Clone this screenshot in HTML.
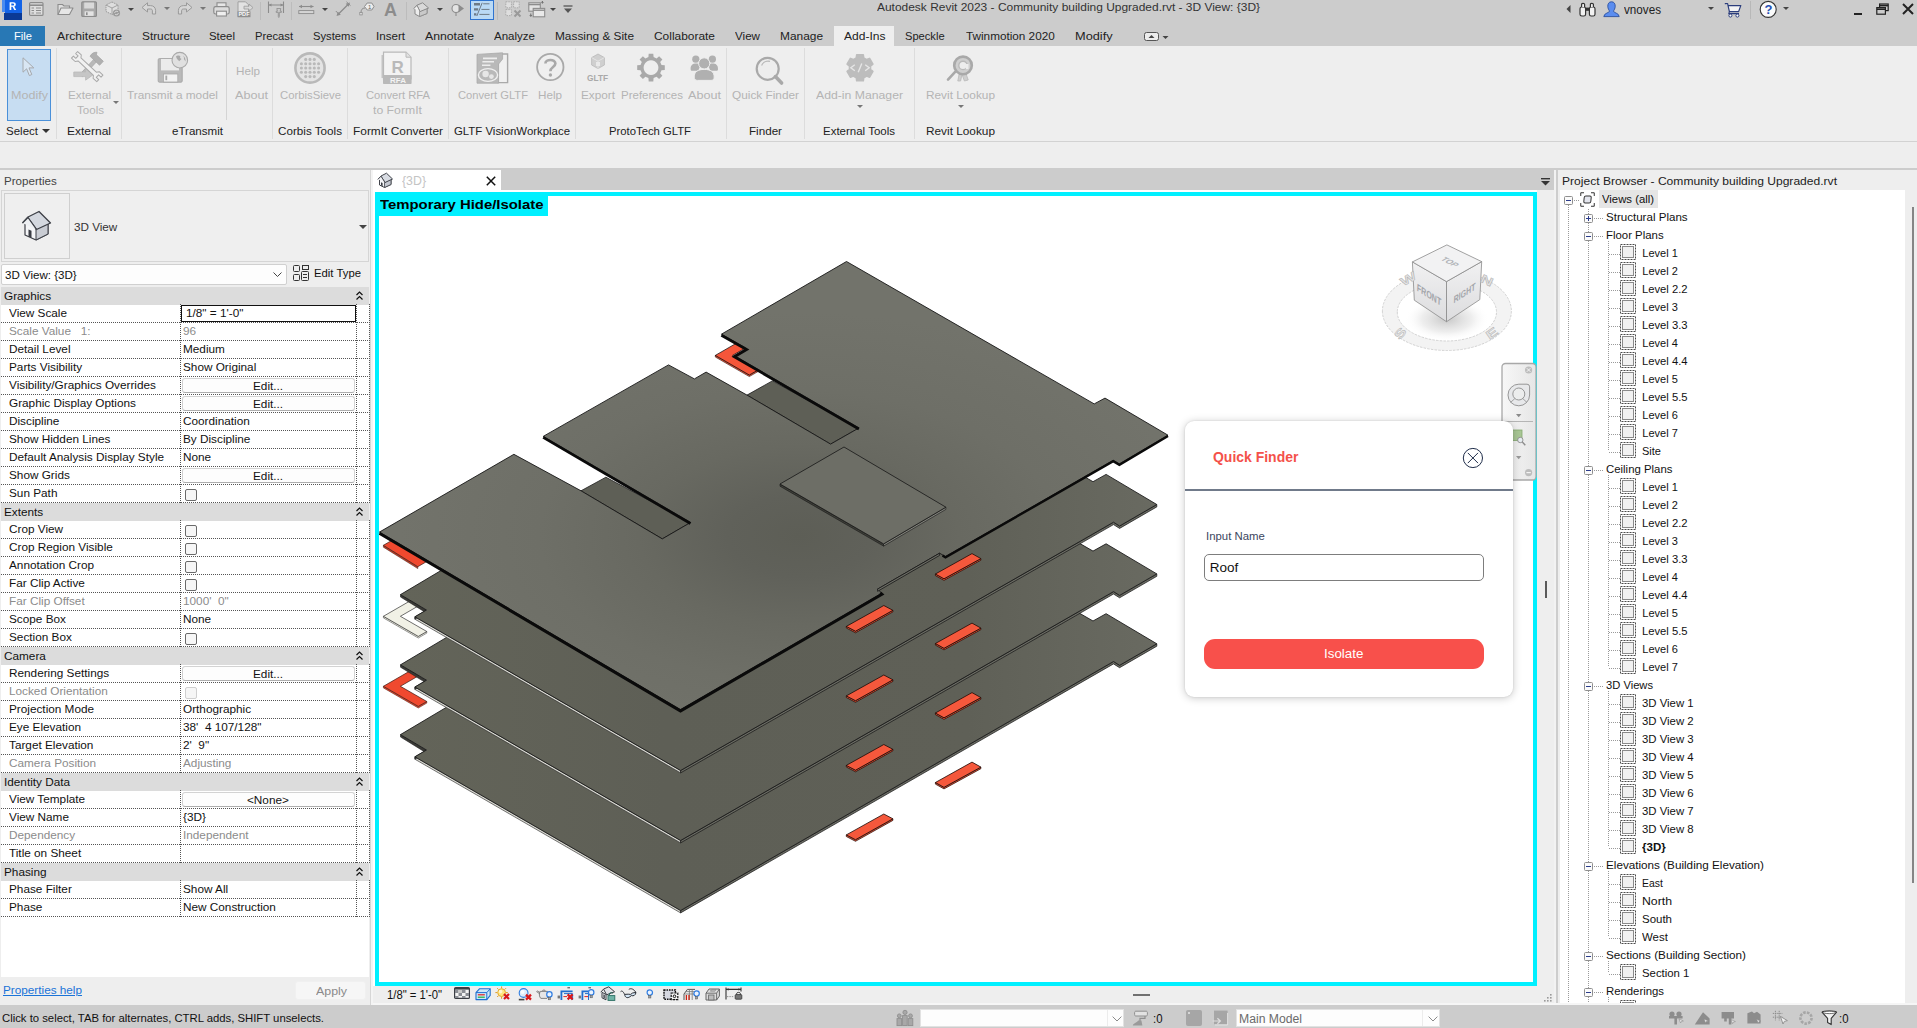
<!DOCTYPE html>
<html><head><meta charset="utf-8"><title>Revit</title>
<style>
*{box-sizing:border-box;margin:0;padding:0}
html,body{width:1917px;height:1028px;overflow:hidden;background:#eeeeee}
body{font-family:"Liberation Sans",sans-serif;font-size:11.5px;color:#1a1a1a;position:relative}
.a{position:absolute}
.t{position:absolute;white-space:pre}
.c{text-align:center}
.dis{color:#b9b9b9}
svg{position:absolute;overflow:visible}
</style></head><body>
<!-- title bar + tab row -->
<div class="a" style="left:0;top:0;width:1917px;height:46px;background:#cccccc"></div>
<div class="a" style="left:0;top:26px;width:45px;height:20px;background:#2878b5"></div>
<div class="a" style="left:834px;top:26px;width:60px;height:20px;background:#eeeeee"></div>
<!-- ribbon -->
<div class="a" style="left:0;top:46px;width:1917px;height:95px;background:#eeeeee"></div>
<div class="a" style="left:0;top:141px;width:1917px;height:1px;background:#d2d2d2"></div>
<div class="a" style="left:0;top:142px;width:1917px;height:26px;background:#eeeeee"></div>
<div class="a" style="left:0;top:168px;width:1917px;height:2px;background:#cccccc"></div>
<!-- status bar -->
<div class="a" style="left:0;top:1006px;width:1917px;height:22px;background:#cccccc"></div>
<div class="t" style="left:877.00px;top:1px;font-size:11px;line-height:12px;height:12px;transform:scaleX(1.0863);transform-origin:0 0;color:#333;">Autodesk Revit 2023 - Community building Upgraded.rvt - 3D View: {3D}</div>
<div class="t" style="left:13.50px;top:30px;font-size:11px;line-height:12px;height:12px;transform:scaleX(1.0156);transform-origin:0 0;color:#fff;">File</div>
<div class="t" style="left:57.00px;top:30px;font-size:11px;line-height:12px;height:12px;transform:scaleX(1.1075);transform-origin:0 0;color:#222;">Architecture</div>
<div class="t" style="left:142.00px;top:30px;font-size:11px;line-height:12px;height:12px;transform:scaleX(1.0755);transform-origin:0 0;color:#222;">Structure</div>
<div class="t" style="left:209.00px;top:30px;font-size:11px;line-height:12px;height:12px;transform:scaleX(1.0370);transform-origin:0 0;color:#222;">Steel</div>
<div class="t" style="left:255.00px;top:30px;font-size:11px;line-height:12px;height:12px;transform:scaleX(1.0190);transform-origin:0 0;color:#222;">Precast</div>
<div class="t" style="left:313.00px;top:30px;font-size:11px;line-height:12px;height:12px;transform:scaleX(1.0195);transform-origin:0 0;color:#222;">Systems</div>
<div class="t" style="left:376.00px;top:30px;font-size:11px;line-height:12px;height:12px;transform:scaleX(1.0541);transform-origin:0 0;color:#222;">Insert</div>
<div class="t" style="left:425.00px;top:30px;font-size:11px;line-height:12px;height:12px;transform:scaleX(1.1127);transform-origin:0 0;color:#222;">Annotate</div>
<div class="t" style="left:494.00px;top:30px;font-size:11px;line-height:12px;height:12px;transform:scaleX(1.0477);transform-origin:0 0;color:#222;">Analyze</div>
<div class="t" style="left:555.00px;top:30px;font-size:11px;line-height:12px;height:12px;transform:scaleX(1.0768);transform-origin:0 0;color:#222;">Massing &amp; Site</div>
<div class="t" style="left:654.00px;top:30px;font-size:11px;line-height:12px;height:12px;transform:scaleX(1.0844);transform-origin:0 0;color:#222;">Collaborate</div>
<div class="t" style="left:735.00px;top:30px;font-size:11px;line-height:12px;height:12px;transform:scaleX(1.0574);transform-origin:0 0;color:#222;">View</div>
<div class="t" style="left:780.00px;top:30px;font-size:11px;line-height:12px;height:12px;transform:scaleX(1.0818);transform-origin:0 0;color:#222;">Manage</div>
<div class="t" style="left:843.50px;top:30px;font-size:11px;line-height:12px;height:12px;transform:scaleX(1.0947);transform-origin:0 0;color:#222;">Add-Ins</div>
<div class="t" style="left:905.40px;top:30px;font-size:11px;line-height:12px;height:12px;transform:scaleX(1.0119);transform-origin:0 0;color:#222;">Speckle</div>
<div class="t" style="left:966.00px;top:30px;font-size:11px;line-height:12px;height:12px;transform:scaleX(1.0667);transform-origin:0 0;color:#222;">Twinmotion 2020</div>
<div class="t" style="left:1075.40px;top:30px;font-size:11px;line-height:12px;height:12px;transform:scaleX(1.1605);transform-origin:0 0;color:#222;">Modify</div>
<svg style="left:1144px;top:32px" width="30" height="10"><rect x="0.5" y="0.5" width="14" height="8" rx="2" fill="#ececec" stroke="#555" stroke-width="1"/><path d="M4.5 6 L7.5 3 L10.5 6Z" fill="#444"/><path d="M18.5 4 L24.5 4 L21.5 7Z" fill="#444"/></svg>
<div class="a" style="left:56px;top:48px;width:1px;height:91px;background:#dcdcdc;"></div>
<div class="a" style="left:121px;top:48px;width:1px;height:91px;background:#dcdcdc;"></div>
<div class="a" style="left:272px;top:48px;width:1px;height:91px;background:#dcdcdc;"></div>
<div class="a" style="left:347px;top:48px;width:1px;height:91px;background:#dcdcdc;"></div>
<div class="a" style="left:448px;top:48px;width:1px;height:91px;background:#dcdcdc;"></div>
<div class="a" style="left:575px;top:48px;width:1px;height:91px;background:#dcdcdc;"></div>
<div class="a" style="left:726px;top:48px;width:1px;height:91px;background:#dcdcdc;"></div>
<div class="a" style="left:804px;top:48px;width:1px;height:91px;background:#dcdcdc;"></div>
<div class="a" style="left:914px;top:48px;width:1px;height:91px;background:#dcdcdc;"></div>
<div class="a" style="left:226px;top:50px;width:1px;height:70px;background:#d4d4d4;"></div>
<div class="a" style="left:7px;top:49px;width:44px;height:72px;background:#c7ddf2;border:1px solid #4a90d9;"></div>
<div class="t" style="left:10.50px;top:89px;font-size:11px;line-height:12px;height:12px;transform:scaleX(1.1420);transform-origin:0 0;color:#b4b4b4;">Modify</div>
<div class="t" style="left:67.50px;top:89px;font-size:11px;line-height:12px;height:12px;transform:scaleX(1.0656);transform-origin:0 0;color:#b4b4b4;">External</div>
<div class="t" style="left:76.50px;top:104px;font-size:11px;line-height:12px;height:12px;transform:scaleX(1.0515);transform-origin:0 0;color:#b4b4b4;">Tools</div>
<div class="t" style="left:127.00px;top:89px;font-size:11px;line-height:12px;height:12px;transform:scaleX(1.0761);transform-origin:0 0;color:#b4b4b4;">Transmit a model</div>
<div class="t" style="left:235.50px;top:65px;font-size:11px;line-height:12px;height:12px;transform:scaleX(1.0610);transform-origin:0 0;color:#b4b4b4;">Help</div>
<div class="t" style="left:235.00px;top:89px;font-size:11px;line-height:12px;height:12px;transform:scaleX(1.1480);transform-origin:0 0;color:#b4b4b4;">About</div>
<div class="t" style="left:280.00px;top:89px;font-size:11px;line-height:12px;height:12px;transform:scaleX(1.0287);transform-origin:0 0;color:#b4b4b4;">CorbisSieve</div>
<div class="t" style="left:365.50px;top:89px;font-size:11px;line-height:12px;height:12px;transform:scaleX(1.0164);transform-origin:0 0;color:#b4b4b4;">Convert RFA</div>
<div class="t" style="left:373.00px;top:104px;font-size:11px;line-height:12px;height:12px;transform:scaleX(1.1134);transform-origin:0 0;color:#b4b4b4;">to FormIt</div>
<div class="t" style="left:457.50px;top:89px;font-size:11px;line-height:12px;height:12px;transform:scaleX(1.0164);transform-origin:0 0;color:#b4b4b4;">Convert GLTF</div>
<div class="t" style="left:538.00px;top:89px;font-size:11px;line-height:12px;height:12px;transform:scaleX(1.0610);transform-origin:0 0;color:#b4b4b4;">Help</div>
<div class="t" style="left:580.50px;top:89px;font-size:11px;line-height:12px;height:12px;transform:scaleX(1.0694);transform-origin:0 0;color:#b4b4b4;">Export</div>
<div class="t" style="left:620.50px;top:89px;font-size:11px;line-height:12px;height:12px;transform:scaleX(1.0454);transform-origin:0 0;color:#b4b4b4;">Preferences</div>
<div class="t" style="left:687.50px;top:89px;font-size:11px;line-height:12px;height:12px;transform:scaleX(1.1480);transform-origin:0 0;color:#b4b4b4;">About</div>
<div class="t" style="left:732.00px;top:89px;font-size:11px;line-height:12px;height:12px;transform:scaleX(1.0746);transform-origin:0 0;color:#b4b4b4;">Quick Finder</div>
<div class="t" style="left:816.00px;top:89px;font-size:11px;line-height:12px;height:12px;transform:scaleX(1.1116);transform-origin:0 0;color:#b4b4b4;">Add-in Manager</div>
<div class="t" style="left:926.00px;top:89px;font-size:11px;line-height:12px;height:12px;transform:scaleX(1.0747);transform-origin:0 0;color:#b4b4b4;">Revit Lookup</div>
<svg style="left:112.5px;top:101px" width="6" height="3"><path d="M0 0 L6 0 L3 3Z" fill="#777"/></svg>
<svg style="left:856.5px;top:105px" width="6" height="3"><path d="M0 0 L6 0 L3 3Z" fill="#777"/></svg>
<svg style="left:957.5px;top:105px" width="6" height="3"><path d="M0 0 L6 0 L3 3Z" fill="#777"/></svg>
<div class="t" style="left:66.50px;top:125px;font-size:11px;line-height:12px;height:12px;transform:scaleX(1.0904);transform-origin:0 0;color:#222;">External</div>
<div class="t" style="left:171.50px;top:125px;font-size:11px;line-height:12px;height:12px;transform:scaleX(1.0518);transform-origin:0 0;color:#222;">eTransmit</div>
<div class="t" style="left:278.00px;top:125px;font-size:11px;line-height:12px;height:12px;transform:scaleX(1.0610);transform-origin:0 0;color:#222;">Corbis Tools</div>
<div class="t" style="left:353.00px;top:125px;font-size:11px;line-height:12px;height:12px;transform:scaleX(1.0826);transform-origin:0 0;color:#222;">FormIt Converter</div>
<div class="t" style="left:454.00px;top:125px;font-size:11px;line-height:12px;height:12px;transform:scaleX(1.0369);transform-origin:0 0;color:#222;">GLTF VisionWorkplace</div>
<div class="t" style="left:609.00px;top:125px;font-size:11px;line-height:12px;height:12px;transform:scaleX(1.0266);transform-origin:0 0;color:#222;">ProtoTech GLTF</div>
<div class="t" style="left:749.00px;top:125px;font-size:11px;line-height:12px;height:12px;transform:scaleX(1.0584);transform-origin:0 0;color:#222;">Finder</div>
<div class="t" style="left:823.00px;top:125px;font-size:11px;line-height:12px;height:12px;transform:scaleX(1.0452);transform-origin:0 0;color:#222;">External Tools</div>
<div class="t" style="left:926.00px;top:125px;font-size:11px;line-height:12px;height:12px;transform:scaleX(1.0747);transform-origin:0 0;color:#222;">Revit Lookup</div>
<div class="t" style="left:6.00px;top:125px;font-size:11px;line-height:12px;height:12px;transform:scaleX(1.0467);transform-origin:0 0;color:#222;">Select</div>
<svg style="left:42px;top:129px" width="8" height="4"><path d="M0 0 L8 0 L4 4Z" fill="#333"/></svg>
<svg style="left:22px;top:57px" width="14" height="21" viewBox="0 0 14 21"><path d="M1 0.8V15.2L4.6 11.8L7.4 18.6L9.8 17.5L7 10.9H11.8Z" fill="#d9e6f3" stroke="#a6a9ad" stroke-width="1" stroke-linejoin="round"/></svg>
<svg style="left:73px;top:53px" width="32" height="29" viewBox="0 0 32 29"><g stroke-linejoin="round">
<g transform="translate(18.5 11.5) rotate(-47)"><path d="M-15 -1.8H6V1.8H-15Z" fill="#b9b9b9" stroke="#a9a9a9" stroke-width="0.8"/><path d="M5 -6.6C8 -7.6 11 -6.6 12.6 -4.4L10.4 -3V6.4H5Z" fill="#b0b0b0" stroke="#a9a9a9" stroke-width="0.8"/></g>
<path d="M0.8 19H12.6V15.6L20.6 21.4L12.6 27.2V23.6H0.8Z" fill="#c6c6c6" stroke="#b9b9b9" stroke-width="0.8"/>
<g transform="translate(14.2 13.6) rotate(43)"><path d="M-10.5 -2.1L-12.3 -4.5H-17.3V-1.7H-14V1.7H-17.3V4.5H-12.3L-10.5 2.1H10.5L12.3 4.5H17.3V1.7H14V-1.7H17.3V-4.5H12.3L10.5 -2.1Z" fill="#f1f1f1" stroke="#a9a9a9" stroke-width="1"/></g></g></svg>
<svg style="left:157px;top:52px" width="32" height="31" viewBox="0 0 32 31"><rect x="1.2" y="6.6" width="24" height="23.6" rx="1.2" fill="#b9b9b9" stroke="#a9a9a9" stroke-width="1"/>
<rect x="4" y="7" width="18" height="11.4" fill="#ebebeb"/><rect x="6.4" y="22" width="14.4" height="8" fill="#f2f2f2" stroke="#a9a9a9" stroke-width="0.8"/><rect x="8.4" y="23.6" width="1.8" height="4.6" fill="#a9a9a9"/>
<circle cx="22.8" cy="8.2" r="7.8" fill="#e0e0e0" stroke="#a9a9a9" stroke-width="1.1"/><path d="M19 4.6C20.2 3 22.6 3.4 23.4 4.4C22.6 5.4 23.4 6.4 24.4 6.8C24.4 8.2 22.8 8 22.4 9.2C21.4 8.4 19.6 7.4 19 4.6ZM26 3.6C27.8 5 28.8 7 28.6 9.6C27.6 8.4 26.6 7.2 27 5.6Z" fill="#a9a9a9"/></svg>
<svg style="left:294px;top:52px" width="32" height="32" viewBox="0 0 32 32"><circle cx="16" cy="16" r="14.6" fill="#e4e4e4" stroke="#b9b9b9" stroke-width="2.6"/><circle cx="7.4" cy="11.7" r="1.55" fill="#b9b9b9"/><circle cx="7.4" cy="16.0" r="1.55" fill="#b9b9b9"/><circle cx="7.4" cy="20.3" r="1.55" fill="#b9b9b9"/><circle cx="11.7" cy="7.4" r="1.55" fill="#b9b9b9"/><circle cx="11.7" cy="11.7" r="1.55" fill="#b9b9b9"/><circle cx="11.7" cy="16.0" r="1.55" fill="#b9b9b9"/><circle cx="11.7" cy="20.3" r="1.55" fill="#b9b9b9"/><circle cx="11.7" cy="24.6" r="1.55" fill="#b9b9b9"/><circle cx="16.0" cy="7.4" r="1.55" fill="#b9b9b9"/><circle cx="16.0" cy="11.7" r="1.55" fill="#b9b9b9"/><circle cx="16.0" cy="16.0" r="1.55" fill="#b9b9b9"/><circle cx="16.0" cy="20.3" r="1.55" fill="#b9b9b9"/><circle cx="16.0" cy="24.6" r="1.55" fill="#b9b9b9"/><circle cx="20.3" cy="7.4" r="1.55" fill="#b9b9b9"/><circle cx="20.3" cy="11.7" r="1.55" fill="#b9b9b9"/><circle cx="20.3" cy="16.0" r="1.55" fill="#b9b9b9"/><circle cx="20.3" cy="20.3" r="1.55" fill="#b9b9b9"/><circle cx="20.3" cy="24.6" r="1.55" fill="#b9b9b9"/><circle cx="24.6" cy="11.7" r="1.55" fill="#b9b9b9"/><circle cx="24.6" cy="16.0" r="1.55" fill="#b9b9b9"/><circle cx="24.6" cy="20.3" r="1.55" fill="#b9b9b9"/></svg>
<svg style="left:381px;top:51px" width="32" height="34" viewBox="0 0 32 34"><path d="M2.5 1.2H25L30 6.2V28H2.5Z" fill="#f3f3f3" stroke="#b9b9b9" stroke-width="1.2"/><path d="M1.2 4V27" stroke="#b9b9b9" stroke-width="1.2"/><path d="M25 1.2V6.2H30" fill="#e2e2e2" stroke="#b9b9b9" stroke-width="1"/>
<text x="10.5" y="22" font-family="Liberation Sans" font-weight="bold" font-size="17" fill="#b9b9b9">R</text>
<rect x="2" y="24" width="28.6" height="9" rx="0.8" fill="#b9b9b9"/><text x="9" y="31.6" font-family="Liberation Sans" font-weight="bold" font-size="8" fill="#f4f4f4">RFA</text></svg>
<svg style="left:476px;top:52px" width="34" height="32" viewBox="0 0 34 32"><path d="M22 2H31.6V30.6H22Z" fill="#f0f0f0" stroke="#a9a9a9" stroke-width="1.4"/><path d="M1 2.4L26.6 0.8V7L22.6 12V31.2H1Z" fill="#b9b9b9" stroke="#a9a9a9" stroke-width="0.8"/>
<path d="M7 6.4H21M6.4 9.8H18M6 13.2H14.4" stroke="#ededed" stroke-width="1.6"/><ellipse cx="12" cy="23" rx="9.6" ry="6.4" fill="#b9b9b9" stroke="#f0f0f0" stroke-width="1.4"/><circle cx="9.6" cy="22" r="3.2" fill="#e6e6e6"/><circle cx="15.4" cy="24.6" r="2.4" fill="#e6e6e6"/></svg>
<svg style="left:535px;top:52px" width="31" height="31" viewBox="0 0 31 31"><circle cx="15.3" cy="15" r="13.2" fill="#efefef" stroke="#a9a9a9" stroke-width="1.8"/><path d="M10.4 11.4C10.4 7 20.4 6.6 20.4 11.6C20.4 15 15.4 15.2 15.4 19.2" fill="none" stroke="#a9a9a9" stroke-width="2.6"/><circle cx="15.4" cy="23" r="1.7" fill="#a9a9a9"/></svg>
<svg style="left:586px;top:53px" width="24" height="29" viewBox="0 0 24 29"><path d="M12 1L18.4 4.6V12L12 15.6L5.6 12V4.6Z" fill="#cfcfcf" stroke="#b9b9b9" stroke-width="0.8"/><path d="M5.6 4.6L12 8.2L18.4 4.6M12 8.2V15.6" fill="none" stroke="#e4e4e4" stroke-width="1"/><rect x="10" y="9" width="4" height="4" fill="#e9e9e9"/>
<text x="1" y="27.6" font-family="Liberation Sans" font-weight="bold" font-size="8.6" fill="#a9a9a9" textLength="21" lengthAdjust="spacingAndGlyphs">GLTF</text></svg>
<svg style="left:636px;top:53px" width="30" height="30" viewBox="0 0 30 30"><path d="M12.4 4.1 L12.7 0.8 L17.3 0.8 L17.6 4.1 L20.6 5.4 L23.1 3.2 L26.4 6.5 L24.2 9.0 L25.5 12.0 L28.8 12.3 L28.8 16.9 L25.5 17.2 L24.2 20.2 L26.4 22.7 L23.1 26.0 L20.6 23.8 L17.6 25.1 L17.3 28.4 L12.7 28.4 L12.4 25.1 L9.4 23.8 L6.9 26.0 L3.6 22.7 L5.8 20.2 L4.5 17.2 L1.2 16.9 L1.2 12.3 L4.5 12.0 L5.8 9.0 L3.6 6.5 L6.9 3.2 L9.4 5.4Z M15 7.2a7.4 7.4 0 1 0 0.01 0Z" fill="#a9a9a9" fill-rule="evenodd"/></svg>
<svg style="left:690px;top:54px" width="29" height="27" viewBox="0 0 29 27"><g fill="#b0b0b0"><circle cx="5.8" cy="5.2" r="3.6"/><circle cx="22.4" cy="5.2" r="3.6"/><path d="M0.6 15C0.6 10.6 3 9.4 6 9.4C8 9.4 9.4 10 10.2 11.4L8.4 16.8H2C1 16.8 0.6 16 0.6 15ZM28 15C28 10.6 25.6 9.4 22.6 9.4C20.6 9.4 19.2 10 18.4 11.4L20.2 16.8H26.6C27.6 16.8 28 16 28 15Z"/>
<circle cx="14.2" cy="9.4" r="5.6" stroke="#eeeeee" stroke-width="1"/><path d="M4.2 23C4.2 17.6 8 15.4 14.2 15.4C20.4 15.4 24.2 17.6 24.2 23C24.2 25.4 23 26.4 21 26.4H7.4C5.4 26.4 4.2 25.4 4.2 23Z" stroke="#eeeeee" stroke-width="1"/></g></svg>
<svg style="left:754px;top:55px" width="30" height="31" viewBox="0 0 30 31"><circle cx="13.7" cy="13.8" r="11" fill="#ededed" stroke="#a9a9a9" stroke-width="2.2"/><path d="M7.6 10.4C9 7 12.6 5.6 16 6.4" fill="none" stroke="#b9b9b9" stroke-width="1.2"/><path d="M21.4 21.6L27.6 28" stroke="#a9a9a9" stroke-width="3.6" stroke-linecap="round"/></svg>
<svg style="left:846px;top:54px" width="28" height="28" viewBox="0 0 28 28"><path d="M10.3 3.9 L10.7 0.8 L17.3 0.8 L17.7 3.9 L20.7 5.6 L23.6 4.4 L26.9 10.2 L24.5 12.1 L24.5 15.5 L26.9 17.4 L23.6 23.2 L20.7 22.0 L17.7 23.7 L17.3 26.8 L10.7 26.8 L10.3 23.7 L7.3 22.0 L4.4 23.2 L1.1 17.4 L3.5 15.5 L3.5 12.1 L1.1 10.2 L4.4 4.4 L7.3 5.6Z" fill="#bdbdbd" stroke="#bdbdbd" stroke-width="1.6" stroke-linejoin="round"/><path d="M8.8 10.8L4.8 13.8L8.8 16.8M19.2 10.8L23.2 13.8L19.2 16.8M15.8 9.4L12.2 18.2" fill="none" stroke="#e6e6e6" stroke-width="1.4"/></svg>
<svg style="left:946px;top:54px" width="30" height="28" viewBox="0 0 30 28"><path d="M13.4 18.4L11.8 27H14.6L16 20.4L18.4 27L22.2 26L19.6 18.4Z" fill="#cfcfcf" stroke="#b9b9b9" stroke-width="0.8"/><path d="M9.4 17.6L2 25.6" stroke="#a9a9a9" stroke-width="2.6" stroke-linecap="round"/>
<circle cx="17" cy="11.4" r="8.8" fill="#cfcfcf" stroke="#a9a9a9" stroke-width="2.6"/><circle cx="17" cy="11.4" r="4.2" fill="#ededed" stroke="#b9b9b9" stroke-width="1.4"/><path d="M17 11.4H21.2V15" stroke="#ededed" stroke-width="2.6" fill="none"/></svg>
<svg style="left:2px;top:0px" width="20" height="20" viewBox="0 0 20 20"><path d="M0 0H3V12H0Z" fill="#4a8cf0"/><path d="M3 0H20V13H3Z" fill="#1464e8"/><path d="M2 13H20V20H2Z" fill="#0b3a96"/><path d="M7.6 10V2.2H11.2C12.9 2.2 13.8 3.1 13.8 4.4C13.8 5.5 13.2 6.2 12.2 6.5L14.2 10H12.3L10.5 6.8H9.3V10Z M9.3 3.6V5.5H11C11.7 5.5 12.1 5.1 12.1 4.5C12.1 3.9 11.7 3.6 11 3.6Z" fill="#fff"/></svg>
<svg style="left:29px;top:2px" width="15" height="15" viewBox="0 0 15 15"><rect x="0.6" y="0.6" width="13.4" height="12.8" rx="1" fill="#dedede" stroke="#8c8c8c" stroke-width="1.2"/><path d="M0.6 3.2H14" stroke="#8c8c8c" stroke-width="1.6"/><path d="M2.5 6H5M2.5 8.5H5M2.5 11H5M7 6H12M7 8.5H12M7 11H12" stroke="#8c8c8c" stroke-width="1"/></svg>
<svg style="left:57px;top:3px" width="17" height="13" viewBox="0 0 17 13"><path d="M1 11.5V1.5H5.5L7 3H12.5V5" fill="#dedede" stroke="#8c8c8c" stroke-width="1.1"/><path d="M1 11.5L4 5H16L12.5 11.5Z" fill="#e6e6e6" stroke="#8c8c8c" stroke-width="1.1" stroke-linejoin="round"/></svg>
<svg style="left:81px;top:1px" width="17" height="17" viewBox="0 0 17 17"><rect x="0.8" y="0.8" width="14.6" height="14.6" rx="1" fill="#a9a9a9" stroke="#8c8c8c" stroke-width="1.2"/><rect x="3.2" y="1.5" width="9.8" height="6" fill="#d9d9d9"/><rect x="3.6" y="10.3" width="9" height="4.6" fill="#e3e3e3"/><rect x="5" y="11.3" width="1.6" height="2.8" fill="#8c8c8c"/></svg>
<svg style="left:105px;top:1px" width="16" height="17" viewBox="0 0 16 17"><path d="M7 1L13 4V10.5L7 13.5L1 10.5V4Z" fill="#dedede" stroke="#9a9a9a" stroke-width="1" stroke-dasharray="1.5 0.8"/><path d="M1 4L7 7L13 4M7 7V13.5" fill="none" stroke="#9a9a9a" stroke-width="0.9"/><circle cx="11.5" cy="12" r="3.6" fill="#9c9c9c"/><path d="M9.6 12a2 2 0 0 1 3.4 -1.2M13.4 12a2 2 0 0 1 -3.4 1.2" stroke="#d8d8d8" stroke-width="0.9" fill="none"/></svg>
<svg style="left:127.5px;top:8px" width="6" height="3"><path d="M0 0 L6 0 L3 3Z" fill="#444"/></svg>
<svg style="left:141px;top:2px" width="16" height="13" viewBox="0 0 16 13"><path d="M1 5.5L6.5 0.8V3.6H9.5C12.5 3.6 14.6 5.6 14.6 8.6V12H11.4V8.8C11.4 7.6 10.7 7 9.5 7H6.5V10Z" fill="#d6d6d6" stroke="#9a9a9a" stroke-width="1" stroke-linejoin="round"/></svg>
<svg style="left:163.5px;top:7px" width="6" height="3"><path d="M0 0 L6 0 L3 3Z" fill="#777"/></svg>
<svg style="left:177px;top:2px" width="16" height="13" viewBox="0 0 16 13"><path d="M15 5.5L9.5 0.8V3.6H6.5C3.5 3.6 1.4 5.6 1.4 8.6V12H4.6V8.8C4.6 7.6 5.3 7 6.5 7H9.5V10Z" fill="#d6d6d6" stroke="#9a9a9a" stroke-width="1" stroke-linejoin="round"/></svg>
<svg style="left:199.5px;top:7px" width="6" height="3"><path d="M0 0 L6 0 L3 3Z" fill="#777"/></svg>
<svg style="left:213px;top:2px" width="17" height="15" viewBox="0 0 17 15"><rect x="4" y="0.8" width="9" height="4" fill="#e6e6e6" stroke="#8c8c8c" stroke-width="1.1"/><rect x="0.8" y="4.6" width="15.4" height="7.4" rx="1.8" fill="#dcdcdc" stroke="#8c8c8c" stroke-width="1.2"/><rect x="3.6" y="9.2" width="9.8" height="4.8" fill="#efefef" stroke="#8c8c8c" stroke-width="1.1"/></svg>
<svg style="left:237px;top:1px" width="17" height="17" viewBox="0 0 17 17"><path d="M1 0.8H8.5L11.5 3.8V15.6H1Z" fill="#e2e2e2" stroke="#a0a0a0" stroke-width="1"/><path d="M7 5.2H12V3L16 6.6L12 10.2V8H7Z" fill="#d8d8d8" stroke="#a0a0a0" stroke-width="0.9"/><rect x="0.5" y="10.4" width="13" height="5.8" fill="#8f8f8f"/><text x="1.4" y="15.3" font-family="Liberation Sans" font-weight="bold" font-size="5.6" fill="#fafafa">PDF</text></svg>
<div class="a" style="left:260px;top:2px;width:1px;height:18px;background:#bcbcbc;"></div>
<svg style="left:267px;top:1px" width="18" height="17" viewBox="0 0 18 17"><path d="M1.5 0.5V12M16.5 0.5V12M1.5 4H16.5" stroke="#8c8c8c" stroke-width="1.1" fill="none"/><path d="M1.5 4L4.5 2.6V5.4ZM16.5 4L13.5 2.6V5.4Z" fill="#8c8c8c"/><path d="M9.8 7.5H13.8L13.2 10.2H14.4V11.4H12.3V15.5L11.8 16.5L11.3 15.5V11.4H9.2V10.2H10.4Z" fill="#c9c9c9" stroke="#8c8c8c" stroke-width="0.8"/></svg>
<div class="a" style="left:291px;top:2px;width:1px;height:18px;background:#bcbcbc;"></div>
<svg style="left:298px;top:3px" width="17" height="12" viewBox="0 0 17 12"><path d="M1 3.5H15.5" stroke="#8c8c8c" stroke-width="1.1"/><path d="M1 3.5L4 1.8V5.2ZM15.5 3.5L12.5 1.8V5.2Z" fill="#8c8c8c"/><rect x="0.8" y="7.6" width="15" height="3" fill="#d5d5d5" stroke="#8c8c8c" stroke-width="0.9"/></svg>
<svg style="left:321.5px;top:8px" width="6" height="3"><path d="M0 0 L6 0 L3 3Z" fill="#444"/></svg>
<svg style="left:335px;top:1px" width="17" height="17" viewBox="0 0 17 17"><path d="M3.5 13L13 3.5" stroke="#8c8c8c" stroke-width="1.2"/><path d="M1.5 15L2.8 10.8L5.8 13.8ZM15 1.5L13.7 5.7L10.7 2.7Z" fill="#8c8c8c"/><path d="M0.8 10L4.2 13.5M11.5 0.8L15.5 4.6" stroke="#8c8c8c" stroke-width="1"/></svg>
<svg style="left:359px;top:2px" width="16" height="14" viewBox="0 0 16 14"><path d="M5.5 4.5L8.2 1H12.8L15 4.5L12.8 8H8.2Z" fill="#ededed" stroke="#8c8c8c" stroke-width="1"/><text x="9" y="6.7" font-family="Liberation Sans" font-size="6" fill="#666">1</text><path d="M6 6C3 6 2 8 2 10.5" fill="none" stroke="#8c8c8c" stroke-width="1"/><rect x="0.8" y="10.5" width="2.4" height="2.4" fill="#e6e6e6" stroke="#8c8c8c" stroke-width="0.8"/></svg>
<div class="t" style="left:384.00px;top:0px;font-size:18px;line-height:20px;height:20px;color:#8c8c8c;font-weight:bold;">A</div>
<div class="a" style="left:406px;top:2px;width:1px;height:18px;background:#bcbcbc;"></div>
<svg style="left:413px;top:2px" width="17" height="15" viewBox="0 0 17 15"><path d="M2 6.5V12L6.5 14.5L14 11.5V6.2L10 2Z" fill="#ececec" stroke="#8a8a8a" stroke-width="1" stroke-linejoin="round"/><path d="M6.5 9V14.5L14 11.5V6.2Z" fill="#c9c9c9" stroke="#8a8a8a" stroke-width="0.8"/><path d="M0.8 6.5L4 3.2L9.6 0.8L15.6 6L7 9.6L4 3.5" fill="#d9d9d9" stroke="#8a8a8a" stroke-width="1" stroke-linejoin="round"/><path d="M0.8 6.5L4 3.4L7 9.6" fill="#efefef" stroke="#8a8a8a" stroke-width="0.9"/></svg>
<svg style="left:436.5px;top:8px" width="6" height="3"><path d="M0 0 L6 0 L3 3Z" fill="#444"/></svg>
<svg style="left:451px;top:3px" width="14" height="13" viewBox="0 0 14 13"><circle cx="5" cy="5.5" r="4" fill="#e4e4e4" stroke="#8c8c8c" stroke-width="1.1"/><path d="M7.5 1.6L13 5.5L7.5 9.4" fill="#8c8c8c"/><path d="M5 9.5V13" stroke="#8c8c8c" stroke-width="1.1"/></svg>
<div class="a" style="left:470px;top:0px;width:24px;height:20px;background:#badaf6;border:1px solid #2f74d0;"></div>
<svg style="left:473px;top:2px" width="18" height="15" viewBox="0 0 18 15"><path d="M1 2.2H7M1 7.4H5.2M1 12.4H3.4" stroke="#6e7a86" stroke-width="2.4"/><path d="M10.2 1.8H16.5M8.4 7.4H16.5M6.4 12.4H16.5" stroke="#6e7a86" stroke-width="1"/><path d="M9.2 0.8L3.8 14" stroke="#6e7a86" stroke-width="1"/></svg>
<div class="a" style="left:497px;top:2px;width:1px;height:18px;background:#bcbcbc;"></div>
<svg style="left:505px;top:1px" width="17" height="17" viewBox="0 0 17 17"><rect x="0.8" y="0.8" width="5.6" height="6" fill="#dedede" stroke="#a6a6a6" stroke-width="0.9" stroke-dasharray="1.5 1"/><rect x="8.6" y="0.8" width="5.6" height="6" fill="#dedede" stroke="#a6a6a6" stroke-width="0.9" stroke-dasharray="1.5 1"/><rect x="0.8" y="8.6" width="5.6" height="6" fill="#dedede" stroke="#a6a6a6" stroke-width="0.9" stroke-dasharray="1.5 1"/><path d="M9.5 9.5L15.5 15.5M15.5 9.5L9.5 15.5" stroke="#9a9a9a" stroke-width="2"/></svg>
<svg style="left:528px;top:1px" width="18" height="17" viewBox="0 0 18 17"><rect x="0.8" y="1.8" width="11.5" height="8.4" fill="#e4e4e4" stroke="#8c8c8c" stroke-width="1.1"/><path d="M0.8 3.6H12.3" stroke="#8c8c8c" stroke-width="1.4"/><rect x="5.2" y="7.4" width="11.5" height="8.4" fill="#e9e9e9" stroke="#8c8c8c" stroke-width="1.1"/><path d="M5.2 9.2H16.7" stroke="#8c8c8c" stroke-width="1.4"/><path d="M14.4 2.6V0.6M13.4 1.6L14.4 0.4L15.4 1.6M2.8 12.5V15.2M1.8 14.2L2.8 15.4L3.8 14.2" stroke="#555" stroke-width="0.8" fill="none"/></svg>
<svg style="left:549.5px;top:8px" width="6" height="3"><path d="M0 0 L6 0 L3 3Z" fill="#444"/></svg>
<svg style="left:563px;top:5px" width="10" height="9" viewBox="0 0 10 9"><path d="M0.5 1H9.5" stroke="#555" stroke-width="1.3"/><path d="M1 3.6H9L5 8Z" fill="#555"/></svg>
<svg style="left:1566px;top:5px" width="5" height="8"><path d="M4.5 0L0.5 4L4.5 8Z" fill="#444"/></svg>
<svg style="left:1579px;top:2px" width="17" height="15" viewBox="0 0 17 15"><g fill="#f2f2f2" stroke="#333" stroke-width="1.2"><rect x="1" y="5" width="5.6" height="9" rx="1.8"/><rect x="10.4" y="5" width="5.6" height="9" rx="1.8"/><path d="M2.6 5V2.2C2.6 1 5.6 1 5.6 2.2V5M11.4 5V2.2C11.4 1 14.4 1 14.4 2.2V5"/></g><rect x="6.6" y="5.6" width="3.8" height="3.2" fill="#333"/></svg>
<svg style="left:1603px;top:1px" width="17" height="17" viewBox="0 0 17 17"><path d="M8.5 0.8C11.3 0.8 12.2 3 12.2 5.2C12.2 7.4 11 9.4 10.4 10C10.4 12 16 11.8 16.2 15.6H0.8C1 11.8 6.6 12 6.6 10C6 9.4 4.8 7.4 4.8 5.2C4.8 3 5.7 0.8 8.5 0.8Z" fill="#5b8def" stroke="#2a4f9e" stroke-width="0.9"/></svg>
<div class="t" style="left:1624.00px;top:3px;font-size:12px;line-height:14px;height:14px;transform:scaleX(0.9731);transform-origin:0 0;color:#222;">vnoves</div>
<svg style="left:1708px;top:7px" width="6" height="3"><path d="M0 0 L6 0 L3 3Z" fill="#444"/></svg>
<svg style="left:1724px;top:2px" width="19" height="16" viewBox="0 0 19 16"><path d="M0.8 1.6H3.6L5.4 9.6H14.6L16.8 3.6H4.2" fill="#f4f4f4" stroke="#2b3d7c" stroke-width="1.2" stroke-linejoin="round"/><path d="M5.4 9.6L4.8 11.6H15" fill="none" stroke="#2b3d7c" stroke-width="1.1"/><circle cx="6.4" cy="13.6" r="1.5" fill="#fff" stroke="#2b3d7c" stroke-width="1"/><circle cx="13.4" cy="13.6" r="1.5" fill="#fff" stroke="#2b3d7c" stroke-width="1"/></svg>
<div class="a" style="left:1750px;top:1px;width:1px;height:18px;background:#b8b8b8;"></div>
<svg style="left:1759px;top:0px" width="19" height="19" viewBox="0 0 19 19"><circle cx="9.2" cy="9.4" r="8" fill="#fbfbfb" stroke="#333" stroke-width="1.1"/><text x="5.6" y="14" font-family="Liberation Sans" font-weight="bold" font-size="13" fill="#1f4fb4">?</text></svg>
<svg style="left:1782.5px;top:7px" width="6" height="3"><path d="M0 0 L6 0 L3 3Z" fill="#444"/></svg>
<div class="a" style="left:1854px;top:13px;width:8px;height:2px;background:#222;"></div>
<svg style="left:1876px;top:3px" width="14" height="13" viewBox="0 0 14 13"><rect x="3.6" y="1" width="8.6" height="6.6" fill="none" stroke="#222" stroke-width="1.2"/><path d="M3.6 2.6H12.2" stroke="#222" stroke-width="1.6"/><rect x="0.8" y="4.6" width="8.6" height="6.6" fill="#ccc" stroke="#222" stroke-width="1.2"/><path d="M0.8 6.2H9.4" stroke="#222" stroke-width="1.6"/></svg>
<svg style="left:1902px;top:3px" width="12" height="12" viewBox="0 0 12 12"><path d="M1 1L11 11M11 1L1 11" stroke="#222" stroke-width="2"/></svg>
<div class="a" style="left:370px;top:170px;width:1px;height:836px;background:#d6d6d6;"></div>
<div class="a" style="left:371px;top:170px;width:2px;height:836px;background:#f4f4f4;"></div>
<div class="t" style="left:3.60px;top:175px;font-size:11px;line-height:12px;height:12px;transform:scaleX(1.0532);transform-origin:0 0;color:#444;">Properties</div>
<div class="a" style="left:1px;top:190px;width:368px;height:72px;background:#efefef;border:1px solid #d5d5d5;"></div>
<div class="a" style="left:4px;top:193px;width:66px;height:66px;background:#efefef;border:1px solid #cfcfcf;"></div>
<div class="t" style="left:74.20px;top:221px;font-size:11px;line-height:12px;height:12px;transform:scaleX(1.0623);transform-origin:0 0;color:#333;">3D View</div>
<svg style="left:359px;top:225px" width="8" height="4"><path d="M0 0L8 0L4 4Z" fill="#444"/></svg>
<svg style="left:21px;top:210px" width="31" height="31" viewBox="0 0 31 31">
<path d="M4 14 L4 25 L15 30 L27 24 L27 13 L19 4 Z" fill="#f4f5f7" stroke="#3c3f46" stroke-width="1.2" stroke-linejoin="round"/>
<path d="M15 19 L15 30 L27 24 L27 13 Z" fill="#c9ccd3" stroke="#3c3f46" stroke-width="1"/>
<path d="M1.5 13 L7 7 L18 1.5 L29.5 13 L15.5 19.5 L7 8" fill="#d4d8df" stroke="#3c3f46" stroke-width="1.3" stroke-linejoin="round"/>
<path d="M1.5 13 L7 7.5 L15.5 19.5" fill="#eef0f3" stroke="#3c3f46" stroke-width="1.2" stroke-linejoin="round"/>
<path d="M7.5 19.5 L10.5 20.8 L10.5 27.8 L7.5 26.5Z" fill="#3a3d44"/>
</svg>
<div class="a" style="left:1px;top:264px;width:286px;height:21px;background:#fdfdfd;border:1px solid #d0d0d0;border-radius:2px;"></div>
<div class="t" style="left:5.30px;top:269px;font-size:11px;line-height:12px;height:12px;transform:scaleX(1.0501);transform-origin:0 0;color:#111;">3D View: {3D}</div>
<svg style="left:273px;top:272px" width="9" height="5"><path d="M0.5 0.5L4.5 4.5L8.5 0.5" fill="none" stroke="#444" stroke-width="1"/></svg>
<svg style="left:293px;top:265px" width="17" height="17" viewBox="0 0 17 17"><g fill="none" stroke="#333" stroke-width="1">
<rect x="0.5" y="0.5" width="6" height="6" rx="1"/><rect x="0.5" y="9.5" width="6" height="6" rx="1"/><rect x="9.5" y="0.5" width="6" height="4"/><rect x="8.5" y="6.5" width="7" height="9" rx="1"/><path d="M10 9.5H14M10 12.5H14"/></g></svg>
<div class="t" style="left:314.00px;top:267px;font-size:11px;line-height:12px;height:12px;transform:scaleX(1.0294);transform-origin:0 0;color:#111;">Edit Type</div>
<div class="a" style="left:1px;top:287px;width:368px;height:630px;background:#ffffff;"></div>
<div class="a" style="left:1px;top:287px;width:368px;height:18px;background:#dcdcdc;"></div>
<div class="t" style="left:3.60px;top:290px;font-size:11px;line-height:12px;height:12px;transform:scaleX(1.0700);transform-origin:0 0;color:#111;">Graphics</div>
<svg style="left:356px;top:291px" width="7" height="9"><path d="M0.5 4L3.5 1L6.5 4M0.5 8.5L3.5 5.5L6.5 8.5" fill="none" stroke="#111" stroke-width="1.2"/></svg>
<div class="t" style="left:9.40px;top:307px;font-size:11px;line-height:12px;height:12px;transform:scaleX(1.0700);transform-origin:0 0;color:#111;">View Scale</div>
<div class="a" style="left:181px;top:305px;width:175px;height:17px;background:#fff;border:1.5px solid #111;"></div>
<div class="t" style="left:186.00px;top:307px;font-size:11px;line-height:12px;height:12px;transform:scaleX(1.0700);transform-origin:0 0;color:#111;">1/8&quot; = 1&#x27;-0&quot;</div>
<div class="a" style="left:1px;top:322px;width:368px;height:1px;background-image:linear-gradient(to right,#555 1px,transparent 1px);background-size:2px 1px;"></div>
<div class="t" style="left:9.40px;top:325px;font-size:11px;line-height:12px;height:12px;transform:scaleX(1.0700);transform-origin:0 0;color:#8c8c8c;">Scale Value   1:</div>
<div class="t" style="left:183.30px;top:325px;font-size:11px;line-height:12px;height:12px;transform:scaleX(1.0700);transform-origin:0 0;color:#8c8c8c;">96</div>
<div class="a" style="left:1px;top:340px;width:368px;height:1px;background-image:linear-gradient(to right,#555 1px,transparent 1px);background-size:2px 1px;"></div>
<div class="t" style="left:9.40px;top:343px;font-size:11px;line-height:12px;height:12px;transform:scaleX(1.0700);transform-origin:0 0;color:#111;">Detail Level</div>
<div class="t" style="left:183.30px;top:343px;font-size:11px;line-height:12px;height:12px;transform:scaleX(1.0700);transform-origin:0 0;color:#111;">Medium</div>
<div class="a" style="left:1px;top:358px;width:368px;height:1px;background-image:linear-gradient(to right,#555 1px,transparent 1px);background-size:2px 1px;"></div>
<div class="t" style="left:9.40px;top:361px;font-size:11px;line-height:12px;height:12px;transform:scaleX(1.0700);transform-origin:0 0;color:#111;">Parts Visibility</div>
<div class="t" style="left:183.30px;top:361px;font-size:11px;line-height:12px;height:12px;transform:scaleX(1.0700);transform-origin:0 0;color:#111;">Show Original</div>
<div class="a" style="left:1px;top:376px;width:368px;height:1px;background-image:linear-gradient(to right,#555 1px,transparent 1px);background-size:2px 1px;"></div>
<div class="t" style="left:9.40px;top:379px;font-size:11px;line-height:12px;height:12px;transform:scaleX(1.0700);transform-origin:0 0;color:#111;">Visibility/Graphics Overrides</div>
<div class="a" style="left:182px;top:378px;width:173px;height:15px;background:#fdfdfd;border:1px solid #d3d3d3;border-radius:3px;border-bottom-color:#adadad;"></div>
<div class="t" style="left:252.95px;top:380px;font-size:11px;line-height:12px;height:12px;transform:scaleX(1.0700);transform-origin:0 0;color:#111;">Edit...</div>
<div class="a" style="left:1px;top:394px;width:368px;height:1px;background-image:linear-gradient(to right,#555 1px,transparent 1px);background-size:2px 1px;"></div>
<div class="t" style="left:9.40px;top:397px;font-size:11px;line-height:12px;height:12px;transform:scaleX(1.0700);transform-origin:0 0;color:#111;">Graphic Display Options</div>
<div class="a" style="left:182px;top:396px;width:173px;height:15px;background:#fdfdfd;border:1px solid #d3d3d3;border-radius:3px;border-bottom-color:#adadad;"></div>
<div class="t" style="left:252.95px;top:398px;font-size:11px;line-height:12px;height:12px;transform:scaleX(1.0700);transform-origin:0 0;color:#111;">Edit...</div>
<div class="a" style="left:1px;top:412px;width:368px;height:1px;background-image:linear-gradient(to right,#555 1px,transparent 1px);background-size:2px 1px;"></div>
<div class="t" style="left:9.40px;top:415px;font-size:11px;line-height:12px;height:12px;transform:scaleX(1.0700);transform-origin:0 0;color:#111;">Discipline</div>
<div class="t" style="left:183.30px;top:415px;font-size:11px;line-height:12px;height:12px;transform:scaleX(1.0700);transform-origin:0 0;color:#111;">Coordination</div>
<div class="a" style="left:1px;top:430px;width:368px;height:1px;background-image:linear-gradient(to right,#555 1px,transparent 1px);background-size:2px 1px;"></div>
<div class="t" style="left:9.40px;top:433px;font-size:11px;line-height:12px;height:12px;transform:scaleX(1.0700);transform-origin:0 0;color:#111;">Show Hidden Lines</div>
<div class="t" style="left:183.30px;top:433px;font-size:11px;line-height:12px;height:12px;transform:scaleX(1.0700);transform-origin:0 0;color:#111;">By Discipline</div>
<div class="a" style="left:1px;top:448px;width:368px;height:1px;background-image:linear-gradient(to right,#555 1px,transparent 1px);background-size:2px 1px;"></div>
<div class="t" style="left:9.40px;top:451px;font-size:11px;line-height:12px;height:12px;transform:scaleX(1.0700);transform-origin:0 0;color:#111;">Default Analysis Display Style</div>
<div class="t" style="left:183.30px;top:451px;font-size:11px;line-height:12px;height:12px;transform:scaleX(1.0700);transform-origin:0 0;color:#111;">None</div>
<div class="a" style="left:1px;top:466px;width:368px;height:1px;background-image:linear-gradient(to right,#555 1px,transparent 1px);background-size:2px 1px;"></div>
<div class="t" style="left:9.40px;top:469px;font-size:11px;line-height:12px;height:12px;transform:scaleX(1.0700);transform-origin:0 0;color:#111;">Show Grids</div>
<div class="a" style="left:182px;top:468px;width:173px;height:15px;background:#fdfdfd;border:1px solid #d3d3d3;border-radius:3px;border-bottom-color:#adadad;"></div>
<div class="t" style="left:252.95px;top:470px;font-size:11px;line-height:12px;height:12px;transform:scaleX(1.0700);transform-origin:0 0;color:#111;">Edit...</div>
<div class="a" style="left:1px;top:484px;width:368px;height:1px;background-image:linear-gradient(to right,#555 1px,transparent 1px);background-size:2px 1px;"></div>
<div class="t" style="left:9.40px;top:487px;font-size:11px;line-height:12px;height:12px;transform:scaleX(1.0700);transform-origin:0 0;color:#111;">Sun Path</div>
<div class="a" style="left:184.5px;top:488.5px;width:12.5px;height:12.5px;background:#f6f6f6;border:1px solid #6a6a6a;border-radius:2px;"></div>
<div class="a" style="left:1px;top:502px;width:368px;height:1px;background-image:linear-gradient(to right,#555 1px,transparent 1px);background-size:2px 1px;"></div>
<div class="a" style="left:1px;top:503px;width:368px;height:18px;background:#dcdcdc;"></div>
<div class="t" style="left:3.60px;top:506px;font-size:11px;line-height:12px;height:12px;transform:scaleX(1.0700);transform-origin:0 0;color:#111;">Extents</div>
<svg style="left:356px;top:507px" width="7" height="9"><path d="M0.5 4L3.5 1L6.5 4M0.5 8.5L3.5 5.5L6.5 8.5" fill="none" stroke="#111" stroke-width="1.2"/></svg>
<div class="t" style="left:9.40px;top:523px;font-size:11px;line-height:12px;height:12px;transform:scaleX(1.0700);transform-origin:0 0;color:#111;">Crop View</div>
<div class="a" style="left:184.5px;top:524.5px;width:12.5px;height:12.5px;background:#f6f6f6;border:1px solid #6a6a6a;border-radius:2px;"></div>
<div class="a" style="left:1px;top:538px;width:368px;height:1px;background-image:linear-gradient(to right,#555 1px,transparent 1px);background-size:2px 1px;"></div>
<div class="t" style="left:9.40px;top:541px;font-size:11px;line-height:12px;height:12px;transform:scaleX(1.0700);transform-origin:0 0;color:#111;">Crop Region Visible</div>
<div class="a" style="left:184.5px;top:542.5px;width:12.5px;height:12.5px;background:#f6f6f6;border:1px solid #6a6a6a;border-radius:2px;"></div>
<div class="a" style="left:1px;top:556px;width:368px;height:1px;background-image:linear-gradient(to right,#555 1px,transparent 1px);background-size:2px 1px;"></div>
<div class="t" style="left:9.40px;top:559px;font-size:11px;line-height:12px;height:12px;transform:scaleX(1.0700);transform-origin:0 0;color:#111;">Annotation Crop</div>
<div class="a" style="left:184.5px;top:560.5px;width:12.5px;height:12.5px;background:#f6f6f6;border:1px solid #6a6a6a;border-radius:2px;"></div>
<div class="a" style="left:1px;top:574px;width:368px;height:1px;background-image:linear-gradient(to right,#555 1px,transparent 1px);background-size:2px 1px;"></div>
<div class="t" style="left:9.40px;top:577px;font-size:11px;line-height:12px;height:12px;transform:scaleX(1.0700);transform-origin:0 0;color:#111;">Far Clip Active</div>
<div class="a" style="left:184.5px;top:578.5px;width:12.5px;height:12.5px;background:#f6f6f6;border:1px solid #6a6a6a;border-radius:2px;"></div>
<div class="a" style="left:1px;top:592px;width:368px;height:1px;background-image:linear-gradient(to right,#555 1px,transparent 1px);background-size:2px 1px;"></div>
<div class="t" style="left:9.40px;top:595px;font-size:11px;line-height:12px;height:12px;transform:scaleX(1.0700);transform-origin:0 0;color:#8c8c8c;">Far Clip Offset</div>
<div class="t" style="left:183.30px;top:595px;font-size:11px;line-height:12px;height:12px;transform:scaleX(1.0700);transform-origin:0 0;color:#8c8c8c;">1000&#x27;  0&quot;</div>
<div class="a" style="left:1px;top:610px;width:368px;height:1px;background-image:linear-gradient(to right,#555 1px,transparent 1px);background-size:2px 1px;"></div>
<div class="t" style="left:9.40px;top:613px;font-size:11px;line-height:12px;height:12px;transform:scaleX(1.0700);transform-origin:0 0;color:#111;">Scope Box</div>
<div class="t" style="left:183.30px;top:613px;font-size:11px;line-height:12px;height:12px;transform:scaleX(1.0700);transform-origin:0 0;color:#111;">None</div>
<div class="a" style="left:1px;top:628px;width:368px;height:1px;background-image:linear-gradient(to right,#555 1px,transparent 1px);background-size:2px 1px;"></div>
<div class="t" style="left:9.40px;top:631px;font-size:11px;line-height:12px;height:12px;transform:scaleX(1.0700);transform-origin:0 0;color:#111;">Section Box</div>
<div class="a" style="left:184.5px;top:632.5px;width:12.5px;height:12.5px;background:#f6f6f6;border:1px solid #6a6a6a;border-radius:2px;"></div>
<div class="a" style="left:1px;top:646px;width:368px;height:1px;background-image:linear-gradient(to right,#555 1px,transparent 1px);background-size:2px 1px;"></div>
<div class="a" style="left:1px;top:647px;width:368px;height:18px;background:#dcdcdc;"></div>
<div class="t" style="left:3.60px;top:650px;font-size:11px;line-height:12px;height:12px;transform:scaleX(1.0700);transform-origin:0 0;color:#111;">Camera</div>
<svg style="left:356px;top:651px" width="7" height="9"><path d="M0.5 4L3.5 1L6.5 4M0.5 8.5L3.5 5.5L6.5 8.5" fill="none" stroke="#111" stroke-width="1.2"/></svg>
<div class="t" style="left:9.40px;top:667px;font-size:11px;line-height:12px;height:12px;transform:scaleX(1.0700);transform-origin:0 0;color:#111;">Rendering Settings</div>
<div class="a" style="left:182px;top:666px;width:173px;height:15px;background:#fdfdfd;border:1px solid #d3d3d3;border-radius:3px;border-bottom-color:#adadad;"></div>
<div class="t" style="left:252.95px;top:668px;font-size:11px;line-height:12px;height:12px;transform:scaleX(1.0700);transform-origin:0 0;color:#111;">Edit...</div>
<div class="a" style="left:1px;top:682px;width:368px;height:1px;background-image:linear-gradient(to right,#555 1px,transparent 1px);background-size:2px 1px;"></div>
<div class="t" style="left:9.40px;top:685px;font-size:11px;line-height:12px;height:12px;transform:scaleX(1.0700);transform-origin:0 0;color:#8c8c8c;">Locked Orientation</div>
<div class="a" style="left:184.5px;top:686.5px;width:12.5px;height:12.5px;background:#f6f6f6;border:1px solid #d0d0d0;border-radius:2px;"></div>
<div class="a" style="left:1px;top:700px;width:368px;height:1px;background-image:linear-gradient(to right,#555 1px,transparent 1px);background-size:2px 1px;"></div>
<div class="t" style="left:9.40px;top:703px;font-size:11px;line-height:12px;height:12px;transform:scaleX(1.0700);transform-origin:0 0;color:#111;">Projection Mode</div>
<div class="t" style="left:183.30px;top:703px;font-size:11px;line-height:12px;height:12px;transform:scaleX(1.0700);transform-origin:0 0;color:#111;">Orthographic</div>
<div class="a" style="left:1px;top:718px;width:368px;height:1px;background-image:linear-gradient(to right,#555 1px,transparent 1px);background-size:2px 1px;"></div>
<div class="t" style="left:9.40px;top:721px;font-size:11px;line-height:12px;height:12px;transform:scaleX(1.0700);transform-origin:0 0;color:#111;">Eye Elevation</div>
<div class="t" style="left:183.30px;top:721px;font-size:11px;line-height:12px;height:12px;transform:scaleX(1.0700);transform-origin:0 0;color:#111;">38&#x27;  4 107/128&quot;</div>
<div class="a" style="left:1px;top:736px;width:368px;height:1px;background-image:linear-gradient(to right,#555 1px,transparent 1px);background-size:2px 1px;"></div>
<div class="t" style="left:9.40px;top:739px;font-size:11px;line-height:12px;height:12px;transform:scaleX(1.0700);transform-origin:0 0;color:#111;">Target Elevation</div>
<div class="t" style="left:183.30px;top:739px;font-size:11px;line-height:12px;height:12px;transform:scaleX(1.0700);transform-origin:0 0;color:#111;">2&#x27;  9&quot;</div>
<div class="a" style="left:1px;top:754px;width:368px;height:1px;background-image:linear-gradient(to right,#555 1px,transparent 1px);background-size:2px 1px;"></div>
<div class="t" style="left:9.40px;top:757px;font-size:11px;line-height:12px;height:12px;transform:scaleX(1.0700);transform-origin:0 0;color:#8c8c8c;">Camera Position</div>
<div class="t" style="left:183.30px;top:757px;font-size:11px;line-height:12px;height:12px;transform:scaleX(1.0700);transform-origin:0 0;color:#8c8c8c;">Adjusting</div>
<div class="a" style="left:1px;top:772px;width:368px;height:1px;background-image:linear-gradient(to right,#555 1px,transparent 1px);background-size:2px 1px;"></div>
<div class="a" style="left:1px;top:773px;width:368px;height:18px;background:#dcdcdc;"></div>
<div class="t" style="left:3.60px;top:776px;font-size:11px;line-height:12px;height:12px;transform:scaleX(1.0700);transform-origin:0 0;color:#111;">Identity Data</div>
<svg style="left:356px;top:777px" width="7" height="9"><path d="M0.5 4L3.5 1L6.5 4M0.5 8.5L3.5 5.5L6.5 8.5" fill="none" stroke="#111" stroke-width="1.2"/></svg>
<div class="t" style="left:9.40px;top:793px;font-size:11px;line-height:12px;height:12px;transform:scaleX(1.0700);transform-origin:0 0;color:#111;">View Template</div>
<div class="a" style="left:182px;top:792px;width:173px;height:15px;background:#fdfdfd;border:1px solid #d3d3d3;border-radius:3px;border-bottom-color:#adadad;"></div>
<div class="t" style="left:247.06px;top:794px;font-size:11px;line-height:12px;height:12px;transform:scaleX(1.0700);transform-origin:0 0;color:#111;">&lt;None&gt;</div>
<div class="a" style="left:1px;top:808px;width:368px;height:1px;background-image:linear-gradient(to right,#555 1px,transparent 1px);background-size:2px 1px;"></div>
<div class="t" style="left:9.40px;top:811px;font-size:11px;line-height:12px;height:12px;transform:scaleX(1.0700);transform-origin:0 0;color:#111;">View Name</div>
<div class="t" style="left:183.30px;top:811px;font-size:11px;line-height:12px;height:12px;transform:scaleX(1.0700);transform-origin:0 0;color:#111;">{3D}</div>
<div class="a" style="left:1px;top:826px;width:368px;height:1px;background-image:linear-gradient(to right,#555 1px,transparent 1px);background-size:2px 1px;"></div>
<div class="t" style="left:9.40px;top:829px;font-size:11px;line-height:12px;height:12px;transform:scaleX(1.0700);transform-origin:0 0;color:#8c8c8c;">Dependency</div>
<div class="t" style="left:183.30px;top:829px;font-size:11px;line-height:12px;height:12px;transform:scaleX(1.0700);transform-origin:0 0;color:#8c8c8c;">Independent</div>
<div class="a" style="left:1px;top:844px;width:368px;height:1px;background-image:linear-gradient(to right,#555 1px,transparent 1px);background-size:2px 1px;"></div>
<div class="t" style="left:9.40px;top:847px;font-size:11px;line-height:12px;height:12px;transform:scaleX(1.0700);transform-origin:0 0;color:#111;">Title on Sheet</div>
<div class="a" style="left:1px;top:862px;width:368px;height:1px;background-image:linear-gradient(to right,#555 1px,transparent 1px);background-size:2px 1px;"></div>
<div class="a" style="left:1px;top:863px;width:368px;height:18px;background:#dcdcdc;"></div>
<div class="t" style="left:3.60px;top:866px;font-size:11px;line-height:12px;height:12px;transform:scaleX(1.0700);transform-origin:0 0;color:#111;">Phasing</div>
<svg style="left:356px;top:867px" width="7" height="9"><path d="M0.5 4L3.5 1L6.5 4M0.5 8.5L3.5 5.5L6.5 8.5" fill="none" stroke="#111" stroke-width="1.2"/></svg>
<div class="t" style="left:9.40px;top:883px;font-size:11px;line-height:12px;height:12px;transform:scaleX(1.0700);transform-origin:0 0;color:#111;">Phase Filter</div>
<div class="t" style="left:183.30px;top:883px;font-size:11px;line-height:12px;height:12px;transform:scaleX(1.0700);transform-origin:0 0;color:#111;">Show All</div>
<div class="a" style="left:1px;top:898px;width:368px;height:1px;background-image:linear-gradient(to right,#555 1px,transparent 1px);background-size:2px 1px;"></div>
<div class="t" style="left:9.40px;top:901px;font-size:11px;line-height:12px;height:12px;transform:scaleX(1.0700);transform-origin:0 0;color:#111;">Phase</div>
<div class="t" style="left:183.30px;top:901px;font-size:11px;line-height:12px;height:12px;transform:scaleX(1.0700);transform-origin:0 0;color:#111;">New Construction</div>
<div class="a" style="left:1px;top:916px;width:368px;height:1px;background-image:linear-gradient(to right,#555 1px,transparent 1px);background-size:2px 1px;"></div>
<div class="a" style="left:180px;top:304px;width:1px;height:199px;background-image:linear-gradient(to bottom,#555 1px,transparent 1px);background-size:1px 2px;"></div>
<div class="a" style="left:356px;top:304px;width:1px;height:199px;background-image:linear-gradient(to bottom,#555 1px,transparent 1px);background-size:1px 2px;"></div>
<div class="a" style="left:369px;top:304px;width:1px;height:199px;background-image:linear-gradient(to bottom,#555 1px,transparent 1px);background-size:1px 2px;"></div>
<div class="a" style="left:180px;top:520px;width:1px;height:127px;background-image:linear-gradient(to bottom,#555 1px,transparent 1px);background-size:1px 2px;"></div>
<div class="a" style="left:356px;top:520px;width:1px;height:127px;background-image:linear-gradient(to bottom,#555 1px,transparent 1px);background-size:1px 2px;"></div>
<div class="a" style="left:369px;top:520px;width:1px;height:127px;background-image:linear-gradient(to bottom,#555 1px,transparent 1px);background-size:1px 2px;"></div>
<div class="a" style="left:180px;top:664px;width:1px;height:109px;background-image:linear-gradient(to bottom,#555 1px,transparent 1px);background-size:1px 2px;"></div>
<div class="a" style="left:356px;top:664px;width:1px;height:109px;background-image:linear-gradient(to bottom,#555 1px,transparent 1px);background-size:1px 2px;"></div>
<div class="a" style="left:369px;top:664px;width:1px;height:109px;background-image:linear-gradient(to bottom,#555 1px,transparent 1px);background-size:1px 2px;"></div>
<div class="a" style="left:180px;top:790px;width:1px;height:73px;background-image:linear-gradient(to bottom,#555 1px,transparent 1px);background-size:1px 2px;"></div>
<div class="a" style="left:356px;top:790px;width:1px;height:73px;background-image:linear-gradient(to bottom,#555 1px,transparent 1px);background-size:1px 2px;"></div>
<div class="a" style="left:369px;top:790px;width:1px;height:73px;background-image:linear-gradient(to bottom,#555 1px,transparent 1px);background-size:1px 2px;"></div>
<div class="a" style="left:180px;top:880px;width:1px;height:37px;background-image:linear-gradient(to bottom,#555 1px,transparent 1px);background-size:1px 2px;"></div>
<div class="a" style="left:356px;top:880px;width:1px;height:37px;background-image:linear-gradient(to bottom,#555 1px,transparent 1px);background-size:1px 2px;"></div>
<div class="a" style="left:369px;top:880px;width:1px;height:37px;background-image:linear-gradient(to bottom,#555 1px,transparent 1px);background-size:1px 2px;"></div>
<div class="a" style="left:1px;top:917px;width:368px;height:60px;background:#ffffff;"></div>
<div class="t" style="left:3.00px;top:984px;font-size:11px;line-height:12px;height:12px;transform:scaleX(1.0678);transform-origin:0 0;color:#1a73d8;text-decoration:underline;">Properties help</div>
<div class="a" style="left:295px;top:981px;width:71px;height:19px;background:#f6f6f6;border:1px solid #f0f0f0;border-radius:3px;"></div>
<div class="t" style="left:315.50px;top:985px;font-size:11px;line-height:12px;height:12px;transform:scaleX(1.1266);transform-origin:0 0;color:#8a8a8a;">Apply</div>
<div class="a" style="left:1554px;top:170px;width:2px;height:836px;background:#f2f2f2;"></div>
<div class="a" style="left:1556px;top:170px;width:2px;height:836px;background:#cdcdcd;"></div>
<div class="a" style="left:1558px;top:170px;width:359px;height:836px;background:#eeeeee;"></div>
<div class="t" style="left:1562.00px;top:175px;font-size:11px;line-height:12px;height:12px;transform:scaleX(1.0971);transform-origin:0 0;color:#222;">Project Browser - Community building Upgraded.rvt</div>
<div class="a" style="left:1560px;top:190px;width:345px;height:813px;background:#ffffff;"></div>
<div class="a" style="left:1912px;top:207px;width:2px;height:676px;background:#858585;"></div>
<div class="a" style="left:1568px;top:205px;width:1px;height:798px;background-image:linear-gradient(to bottom,#9a9a9a 1px,transparent 1px);background-size:1px 2px;"></div>
<div class="a" style="left:1588px;top:209px;width:1px;height:794px;background-image:linear-gradient(to bottom,#9a9a9a 1px,transparent 1px);background-size:1px 2px;"></div>
<svg style="left:1564px;top:196px" width="9" height="9"><rect x="0.5" y="0.5" width="8" height="8" rx="1" fill="#fbfbfb" stroke="#8f8f8f"/><path d="M2 4.5H7" stroke="#2b3c8c" stroke-width="1" fill="none"/></svg>
<div class="a" style="left:1574px;top:200px;width:5px;height:1px;background-image:linear-gradient(to right,#9a9a9a 1px,transparent 1px);background-size:2px 1px;"></div>
<svg style="left:1580px;top:192px" width="15" height="15"><path d="M4 0.75H0.75V4M11 0.75H14.25V4M4 14.25H0.75V11M11 14.25H14.25V11" fill="none" stroke="#333" stroke-width="1"/><rect x="4" y="4" width="7" height="7" rx="1.5" fill="#e4e6ee" stroke="#333" stroke-width="1" transform="skewX(-6) translate(0.8 0)"/></svg>
<div class="a" style="left:1599px;top:190px;width:59px;height:18px;background:#e5e5e5;"></div>
<div class="t" style="left:1602.00px;top:193px;font-size:11px;line-height:12px;height:12px;transform:scaleX(1.0291);transform-origin:0 0;color:#111;">Views (all)</div>
<svg style="left:1584px;top:214px" width="9" height="9"><rect x="0.5" y="0.5" width="8" height="8" rx="1" fill="#fbfbfb" stroke="#8f8f8f"/><path d="M2 4.5H7M4.5 2V7" stroke="#2b3c8c" stroke-width="1" fill="none"/></svg>
<div class="a" style="left:1594px;top:218px;width:9px;height:1px;background-image:linear-gradient(to right,#9a9a9a 1px,transparent 1px);background-size:2px 1px;"></div>
<div class="t" style="left:1606.30px;top:211px;font-size:11px;line-height:12px;height:12px;transform:scaleX(1.0509);transform-origin:0 0;color:#111;">Structural Plans</div>
<svg style="left:1584px;top:232px" width="9" height="9"><rect x="0.5" y="0.5" width="8" height="8" rx="1" fill="#fbfbfb" stroke="#8f8f8f"/><path d="M2 4.5H7" stroke="#2b3c8c" stroke-width="1" fill="none"/></svg>
<div class="a" style="left:1594px;top:236px;width:9px;height:1px;background-image:linear-gradient(to right,#9a9a9a 1px,transparent 1px);background-size:2px 1px;"></div>
<div class="t" style="left:1606.30px;top:229px;font-size:11px;line-height:12px;height:12px;transform:scaleX(1.0354);transform-origin:0 0;color:#111;">Floor Plans</div>
<div class="a" style="left:1609px;top:254px;width:11px;height:1px;background-image:linear-gradient(to right,#9a9a9a 1px,transparent 1px);background-size:2px 1px;"></div>
<svg style="left:1620px;top:244px" width="16" height="16"><rect x="0.5" y="0.5" width="15" height="15" fill="#fff" stroke="#4a4a4a" stroke-dasharray="2 1"/><rect x="2.5" y="2.5" width="11" height="11" fill="#f1f1f1" stroke="#8a8a8a"/></svg>
<div class="t" style="left:1642.30px;top:247px;font-size:11px;line-height:12px;height:12px;color:#111;">Level 1</div>
<div class="a" style="left:1609px;top:272px;width:11px;height:1px;background-image:linear-gradient(to right,#9a9a9a 1px,transparent 1px);background-size:2px 1px;"></div>
<svg style="left:1620px;top:262px" width="16" height="16"><rect x="0.5" y="0.5" width="15" height="15" fill="#fff" stroke="#4a4a4a" stroke-dasharray="2 1"/><rect x="2.5" y="2.5" width="11" height="11" fill="#f1f1f1" stroke="#8a8a8a"/></svg>
<div class="t" style="left:1642.30px;top:265px;font-size:11px;line-height:12px;height:12px;color:#111;">Level 2</div>
<div class="a" style="left:1609px;top:290px;width:11px;height:1px;background-image:linear-gradient(to right,#9a9a9a 1px,transparent 1px);background-size:2px 1px;"></div>
<svg style="left:1620px;top:280px" width="16" height="16"><rect x="0.5" y="0.5" width="15" height="15" fill="#fff" stroke="#4a4a4a" stroke-dasharray="2 1"/><rect x="2.5" y="2.5" width="11" height="11" fill="#f1f1f1" stroke="#8a8a8a"/></svg>
<div class="t" style="left:1642.30px;top:283px;font-size:11px;line-height:12px;height:12px;transform:scaleX(1.0214);transform-origin:0 0;color:#111;">Level 2.2</div>
<div class="a" style="left:1609px;top:308px;width:11px;height:1px;background-image:linear-gradient(to right,#9a9a9a 1px,transparent 1px);background-size:2px 1px;"></div>
<svg style="left:1620px;top:298px" width="16" height="16"><rect x="0.5" y="0.5" width="15" height="15" fill="#fff" stroke="#4a4a4a" stroke-dasharray="2 1"/><rect x="2.5" y="2.5" width="11" height="11" fill="#f1f1f1" stroke="#8a8a8a"/></svg>
<div class="t" style="left:1642.30px;top:301px;font-size:11px;line-height:12px;height:12px;color:#111;">Level 3</div>
<div class="a" style="left:1609px;top:326px;width:11px;height:1px;background-image:linear-gradient(to right,#9a9a9a 1px,transparent 1px);background-size:2px 1px;"></div>
<svg style="left:1620px;top:316px" width="16" height="16"><rect x="0.5" y="0.5" width="15" height="15" fill="#fff" stroke="#4a4a4a" stroke-dasharray="2 1"/><rect x="2.5" y="2.5" width="11" height="11" fill="#f1f1f1" stroke="#8a8a8a"/></svg>
<div class="t" style="left:1642.30px;top:319px;font-size:11px;line-height:12px;height:12px;transform:scaleX(1.0214);transform-origin:0 0;color:#111;">Level 3.3</div>
<div class="a" style="left:1609px;top:344px;width:11px;height:1px;background-image:linear-gradient(to right,#9a9a9a 1px,transparent 1px);background-size:2px 1px;"></div>
<svg style="left:1620px;top:334px" width="16" height="16"><rect x="0.5" y="0.5" width="15" height="15" fill="#fff" stroke="#4a4a4a" stroke-dasharray="2 1"/><rect x="2.5" y="2.5" width="11" height="11" fill="#f1f1f1" stroke="#8a8a8a"/></svg>
<div class="t" style="left:1642.30px;top:337px;font-size:11px;line-height:12px;height:12px;color:#111;">Level 4</div>
<div class="a" style="left:1609px;top:362px;width:11px;height:1px;background-image:linear-gradient(to right,#9a9a9a 1px,transparent 1px);background-size:2px 1px;"></div>
<svg style="left:1620px;top:352px" width="16" height="16"><rect x="0.5" y="0.5" width="15" height="15" fill="#fff" stroke="#4a4a4a" stroke-dasharray="2 1"/><rect x="2.5" y="2.5" width="11" height="11" fill="#f1f1f1" stroke="#8a8a8a"/></svg>
<div class="t" style="left:1642.30px;top:355px;font-size:11px;line-height:12px;height:12px;transform:scaleX(1.0214);transform-origin:0 0;color:#111;">Level 4.4</div>
<div class="a" style="left:1609px;top:380px;width:11px;height:1px;background-image:linear-gradient(to right,#9a9a9a 1px,transparent 1px);background-size:2px 1px;"></div>
<svg style="left:1620px;top:370px" width="16" height="16"><rect x="0.5" y="0.5" width="15" height="15" fill="#fff" stroke="#4a4a4a" stroke-dasharray="2 1"/><rect x="2.5" y="2.5" width="11" height="11" fill="#f1f1f1" stroke="#8a8a8a"/></svg>
<div class="t" style="left:1642.30px;top:373px;font-size:11px;line-height:12px;height:12px;color:#111;">Level 5</div>
<div class="a" style="left:1609px;top:398px;width:11px;height:1px;background-image:linear-gradient(to right,#9a9a9a 1px,transparent 1px);background-size:2px 1px;"></div>
<svg style="left:1620px;top:388px" width="16" height="16"><rect x="0.5" y="0.5" width="15" height="15" fill="#fff" stroke="#4a4a4a" stroke-dasharray="2 1"/><rect x="2.5" y="2.5" width="11" height="11" fill="#f1f1f1" stroke="#8a8a8a"/></svg>
<div class="t" style="left:1642.30px;top:391px;font-size:11px;line-height:12px;height:12px;transform:scaleX(1.0214);transform-origin:0 0;color:#111;">Level 5.5</div>
<div class="a" style="left:1609px;top:416px;width:11px;height:1px;background-image:linear-gradient(to right,#9a9a9a 1px,transparent 1px);background-size:2px 1px;"></div>
<svg style="left:1620px;top:406px" width="16" height="16"><rect x="0.5" y="0.5" width="15" height="15" fill="#fff" stroke="#4a4a4a" stroke-dasharray="2 1"/><rect x="2.5" y="2.5" width="11" height="11" fill="#f1f1f1" stroke="#8a8a8a"/></svg>
<div class="t" style="left:1642.30px;top:409px;font-size:11px;line-height:12px;height:12px;color:#111;">Level 6</div>
<div class="a" style="left:1609px;top:434px;width:11px;height:1px;background-image:linear-gradient(to right,#9a9a9a 1px,transparent 1px);background-size:2px 1px;"></div>
<svg style="left:1620px;top:424px" width="16" height="16"><rect x="0.5" y="0.5" width="15" height="15" fill="#fff" stroke="#4a4a4a" stroke-dasharray="2 1"/><rect x="2.5" y="2.5" width="11" height="11" fill="#f1f1f1" stroke="#8a8a8a"/></svg>
<div class="t" style="left:1642.30px;top:427px;font-size:11px;line-height:12px;height:12px;color:#111;">Level 7</div>
<div class="a" style="left:1609px;top:452px;width:11px;height:1px;background-image:linear-gradient(to right,#9a9a9a 1px,transparent 1px);background-size:2px 1px;"></div>
<svg style="left:1620px;top:442px" width="16" height="16"><rect x="0.5" y="0.5" width="15" height="15" fill="#fff" stroke="#4a4a4a" stroke-dasharray="2 1"/><rect x="2.5" y="2.5" width="11" height="11" fill="#f1f1f1" stroke="#8a8a8a"/></svg>
<div class="t" style="left:1642.30px;top:445px;font-size:11px;line-height:12px;height:12px;transform:scaleX(1.0024);transform-origin:0 0;color:#111;">Site</div>
<svg style="left:1584px;top:466px" width="9" height="9"><rect x="0.5" y="0.5" width="8" height="8" rx="1" fill="#fbfbfb" stroke="#8f8f8f"/><path d="M2 4.5H7" stroke="#2b3c8c" stroke-width="1" fill="none"/></svg>
<div class="a" style="left:1594px;top:470px;width:9px;height:1px;background-image:linear-gradient(to right,#9a9a9a 1px,transparent 1px);background-size:2px 1px;"></div>
<div class="t" style="left:1606.30px;top:463px;font-size:11px;line-height:12px;height:12px;transform:scaleX(1.0343);transform-origin:0 0;color:#111;">Ceiling Plans</div>
<div class="a" style="left:1609px;top:488px;width:11px;height:1px;background-image:linear-gradient(to right,#9a9a9a 1px,transparent 1px);background-size:2px 1px;"></div>
<svg style="left:1620px;top:478px" width="16" height="16"><rect x="0.5" y="0.5" width="15" height="15" fill="#fff" stroke="#4a4a4a" stroke-dasharray="2 1"/><rect x="2.5" y="2.5" width="11" height="11" fill="#f1f1f1" stroke="#8a8a8a"/></svg>
<div class="t" style="left:1642.30px;top:481px;font-size:11px;line-height:12px;height:12px;color:#111;">Level 1</div>
<div class="a" style="left:1609px;top:506px;width:11px;height:1px;background-image:linear-gradient(to right,#9a9a9a 1px,transparent 1px);background-size:2px 1px;"></div>
<svg style="left:1620px;top:496px" width="16" height="16"><rect x="0.5" y="0.5" width="15" height="15" fill="#fff" stroke="#4a4a4a" stroke-dasharray="2 1"/><rect x="2.5" y="2.5" width="11" height="11" fill="#f1f1f1" stroke="#8a8a8a"/></svg>
<div class="t" style="left:1642.30px;top:499px;font-size:11px;line-height:12px;height:12px;color:#111;">Level 2</div>
<div class="a" style="left:1609px;top:524px;width:11px;height:1px;background-image:linear-gradient(to right,#9a9a9a 1px,transparent 1px);background-size:2px 1px;"></div>
<svg style="left:1620px;top:514px" width="16" height="16"><rect x="0.5" y="0.5" width="15" height="15" fill="#fff" stroke="#4a4a4a" stroke-dasharray="2 1"/><rect x="2.5" y="2.5" width="11" height="11" fill="#f1f1f1" stroke="#8a8a8a"/></svg>
<div class="t" style="left:1642.30px;top:517px;font-size:11px;line-height:12px;height:12px;transform:scaleX(1.0214);transform-origin:0 0;color:#111;">Level 2.2</div>
<div class="a" style="left:1609px;top:542px;width:11px;height:1px;background-image:linear-gradient(to right,#9a9a9a 1px,transparent 1px);background-size:2px 1px;"></div>
<svg style="left:1620px;top:532px" width="16" height="16"><rect x="0.5" y="0.5" width="15" height="15" fill="#fff" stroke="#4a4a4a" stroke-dasharray="2 1"/><rect x="2.5" y="2.5" width="11" height="11" fill="#f1f1f1" stroke="#8a8a8a"/></svg>
<div class="t" style="left:1642.30px;top:535px;font-size:11px;line-height:12px;height:12px;color:#111;">Level 3</div>
<div class="a" style="left:1609px;top:560px;width:11px;height:1px;background-image:linear-gradient(to right,#9a9a9a 1px,transparent 1px);background-size:2px 1px;"></div>
<svg style="left:1620px;top:550px" width="16" height="16"><rect x="0.5" y="0.5" width="15" height="15" fill="#fff" stroke="#4a4a4a" stroke-dasharray="2 1"/><rect x="2.5" y="2.5" width="11" height="11" fill="#f1f1f1" stroke="#8a8a8a"/></svg>
<div class="t" style="left:1642.30px;top:553px;font-size:11px;line-height:12px;height:12px;transform:scaleX(1.0214);transform-origin:0 0;color:#111;">Level 3.3</div>
<div class="a" style="left:1609px;top:578px;width:11px;height:1px;background-image:linear-gradient(to right,#9a9a9a 1px,transparent 1px);background-size:2px 1px;"></div>
<svg style="left:1620px;top:568px" width="16" height="16"><rect x="0.5" y="0.5" width="15" height="15" fill="#fff" stroke="#4a4a4a" stroke-dasharray="2 1"/><rect x="2.5" y="2.5" width="11" height="11" fill="#f1f1f1" stroke="#8a8a8a"/></svg>
<div class="t" style="left:1642.30px;top:571px;font-size:11px;line-height:12px;height:12px;color:#111;">Level 4</div>
<div class="a" style="left:1609px;top:596px;width:11px;height:1px;background-image:linear-gradient(to right,#9a9a9a 1px,transparent 1px);background-size:2px 1px;"></div>
<svg style="left:1620px;top:586px" width="16" height="16"><rect x="0.5" y="0.5" width="15" height="15" fill="#fff" stroke="#4a4a4a" stroke-dasharray="2 1"/><rect x="2.5" y="2.5" width="11" height="11" fill="#f1f1f1" stroke="#8a8a8a"/></svg>
<div class="t" style="left:1642.30px;top:589px;font-size:11px;line-height:12px;height:12px;transform:scaleX(1.0214);transform-origin:0 0;color:#111;">Level 4.4</div>
<div class="a" style="left:1609px;top:614px;width:11px;height:1px;background-image:linear-gradient(to right,#9a9a9a 1px,transparent 1px);background-size:2px 1px;"></div>
<svg style="left:1620px;top:604px" width="16" height="16"><rect x="0.5" y="0.5" width="15" height="15" fill="#fff" stroke="#4a4a4a" stroke-dasharray="2 1"/><rect x="2.5" y="2.5" width="11" height="11" fill="#f1f1f1" stroke="#8a8a8a"/></svg>
<div class="t" style="left:1642.30px;top:607px;font-size:11px;line-height:12px;height:12px;color:#111;">Level 5</div>
<div class="a" style="left:1609px;top:632px;width:11px;height:1px;background-image:linear-gradient(to right,#9a9a9a 1px,transparent 1px);background-size:2px 1px;"></div>
<svg style="left:1620px;top:622px" width="16" height="16"><rect x="0.5" y="0.5" width="15" height="15" fill="#fff" stroke="#4a4a4a" stroke-dasharray="2 1"/><rect x="2.5" y="2.5" width="11" height="11" fill="#f1f1f1" stroke="#8a8a8a"/></svg>
<div class="t" style="left:1642.30px;top:625px;font-size:11px;line-height:12px;height:12px;transform:scaleX(1.0214);transform-origin:0 0;color:#111;">Level 5.5</div>
<div class="a" style="left:1609px;top:650px;width:11px;height:1px;background-image:linear-gradient(to right,#9a9a9a 1px,transparent 1px);background-size:2px 1px;"></div>
<svg style="left:1620px;top:640px" width="16" height="16"><rect x="0.5" y="0.5" width="15" height="15" fill="#fff" stroke="#4a4a4a" stroke-dasharray="2 1"/><rect x="2.5" y="2.5" width="11" height="11" fill="#f1f1f1" stroke="#8a8a8a"/></svg>
<div class="t" style="left:1642.30px;top:643px;font-size:11px;line-height:12px;height:12px;color:#111;">Level 6</div>
<div class="a" style="left:1609px;top:668px;width:11px;height:1px;background-image:linear-gradient(to right,#9a9a9a 1px,transparent 1px);background-size:2px 1px;"></div>
<svg style="left:1620px;top:658px" width="16" height="16"><rect x="0.5" y="0.5" width="15" height="15" fill="#fff" stroke="#4a4a4a" stroke-dasharray="2 1"/><rect x="2.5" y="2.5" width="11" height="11" fill="#f1f1f1" stroke="#8a8a8a"/></svg>
<div class="t" style="left:1642.30px;top:661px;font-size:11px;line-height:12px;height:12px;color:#111;">Level 7</div>
<svg style="left:1584px;top:682px" width="9" height="9"><rect x="0.5" y="0.5" width="8" height="8" rx="1" fill="#fbfbfb" stroke="#8f8f8f"/><path d="M2 4.5H7" stroke="#2b3c8c" stroke-width="1" fill="none"/></svg>
<div class="a" style="left:1594px;top:686px;width:9px;height:1px;background-image:linear-gradient(to right,#9a9a9a 1px,transparent 1px);background-size:2px 1px;"></div>
<div class="t" style="left:1606.30px;top:679px;font-size:11px;line-height:12px;height:12px;transform:scaleX(1.0160);transform-origin:0 0;color:#111;">3D Views</div>
<div class="a" style="left:1609px;top:704px;width:11px;height:1px;background-image:linear-gradient(to right,#9a9a9a 1px,transparent 1px);background-size:2px 1px;"></div>
<svg style="left:1620px;top:694px" width="16" height="16"><rect x="0.5" y="0.5" width="15" height="15" fill="#fff" stroke="#4a4a4a" stroke-dasharray="2 1"/><rect x="2.5" y="2.5" width="11" height="11" fill="#f1f1f1" stroke="#8a8a8a"/></svg>
<div class="t" style="left:1642.30px;top:697px;font-size:11px;line-height:12px;height:12px;transform:scaleX(1.0334);transform-origin:0 0;color:#111;">3D View 1</div>
<div class="a" style="left:1609px;top:722px;width:11px;height:1px;background-image:linear-gradient(to right,#9a9a9a 1px,transparent 1px);background-size:2px 1px;"></div>
<svg style="left:1620px;top:712px" width="16" height="16"><rect x="0.5" y="0.5" width="15" height="15" fill="#fff" stroke="#4a4a4a" stroke-dasharray="2 1"/><rect x="2.5" y="2.5" width="11" height="11" fill="#f1f1f1" stroke="#8a8a8a"/></svg>
<div class="t" style="left:1642.30px;top:715px;font-size:11px;line-height:12px;height:12px;transform:scaleX(1.0334);transform-origin:0 0;color:#111;">3D View 2</div>
<div class="a" style="left:1609px;top:740px;width:11px;height:1px;background-image:linear-gradient(to right,#9a9a9a 1px,transparent 1px);background-size:2px 1px;"></div>
<svg style="left:1620px;top:730px" width="16" height="16"><rect x="0.5" y="0.5" width="15" height="15" fill="#fff" stroke="#4a4a4a" stroke-dasharray="2 1"/><rect x="2.5" y="2.5" width="11" height="11" fill="#f1f1f1" stroke="#8a8a8a"/></svg>
<div class="t" style="left:1642.30px;top:733px;font-size:11px;line-height:12px;height:12px;transform:scaleX(1.0334);transform-origin:0 0;color:#111;">3D View 3</div>
<div class="a" style="left:1609px;top:758px;width:11px;height:1px;background-image:linear-gradient(to right,#9a9a9a 1px,transparent 1px);background-size:2px 1px;"></div>
<svg style="left:1620px;top:748px" width="16" height="16"><rect x="0.5" y="0.5" width="15" height="15" fill="#fff" stroke="#4a4a4a" stroke-dasharray="2 1"/><rect x="2.5" y="2.5" width="11" height="11" fill="#f1f1f1" stroke="#8a8a8a"/></svg>
<div class="t" style="left:1642.30px;top:751px;font-size:11px;line-height:12px;height:12px;transform:scaleX(1.0334);transform-origin:0 0;color:#111;">3D View 4</div>
<div class="a" style="left:1609px;top:776px;width:11px;height:1px;background-image:linear-gradient(to right,#9a9a9a 1px,transparent 1px);background-size:2px 1px;"></div>
<svg style="left:1620px;top:766px" width="16" height="16"><rect x="0.5" y="0.5" width="15" height="15" fill="#fff" stroke="#4a4a4a" stroke-dasharray="2 1"/><rect x="2.5" y="2.5" width="11" height="11" fill="#f1f1f1" stroke="#8a8a8a"/></svg>
<div class="t" style="left:1642.30px;top:769px;font-size:11px;line-height:12px;height:12px;transform:scaleX(1.0334);transform-origin:0 0;color:#111;">3D View 5</div>
<div class="a" style="left:1609px;top:794px;width:11px;height:1px;background-image:linear-gradient(to right,#9a9a9a 1px,transparent 1px);background-size:2px 1px;"></div>
<svg style="left:1620px;top:784px" width="16" height="16"><rect x="0.5" y="0.5" width="15" height="15" fill="#fff" stroke="#4a4a4a" stroke-dasharray="2 1"/><rect x="2.5" y="2.5" width="11" height="11" fill="#f1f1f1" stroke="#8a8a8a"/></svg>
<div class="t" style="left:1642.30px;top:787px;font-size:11px;line-height:12px;height:12px;transform:scaleX(1.0334);transform-origin:0 0;color:#111;">3D View 6</div>
<div class="a" style="left:1609px;top:812px;width:11px;height:1px;background-image:linear-gradient(to right,#9a9a9a 1px,transparent 1px);background-size:2px 1px;"></div>
<svg style="left:1620px;top:802px" width="16" height="16"><rect x="0.5" y="0.5" width="15" height="15" fill="#fff" stroke="#4a4a4a" stroke-dasharray="2 1"/><rect x="2.5" y="2.5" width="11" height="11" fill="#f1f1f1" stroke="#8a8a8a"/></svg>
<div class="t" style="left:1642.30px;top:805px;font-size:11px;line-height:12px;height:12px;transform:scaleX(1.0334);transform-origin:0 0;color:#111;">3D View 7</div>
<div class="a" style="left:1609px;top:830px;width:11px;height:1px;background-image:linear-gradient(to right,#9a9a9a 1px,transparent 1px);background-size:2px 1px;"></div>
<svg style="left:1620px;top:820px" width="16" height="16"><rect x="0.5" y="0.5" width="15" height="15" fill="#fff" stroke="#4a4a4a" stroke-dasharray="2 1"/><rect x="2.5" y="2.5" width="11" height="11" fill="#f1f1f1" stroke="#8a8a8a"/></svg>
<div class="t" style="left:1642.30px;top:823px;font-size:11px;line-height:12px;height:12px;transform:scaleX(1.0334);transform-origin:0 0;color:#111;">3D View 8</div>
<div class="a" style="left:1609px;top:848px;width:11px;height:1px;background-image:linear-gradient(to right,#9a9a9a 1px,transparent 1px);background-size:2px 1px;"></div>
<svg style="left:1620px;top:838px" width="16" height="16"><rect x="0.5" y="0.5" width="15" height="15" fill="#fff" stroke="#4a4a4a" stroke-dasharray="2 1"/><rect x="2.5" y="2.5" width="11" height="11" fill="#f1f1f1" stroke="#8a8a8a"/></svg>
<div class="t" style="left:1642.30px;top:841px;font-size:11px;line-height:12px;height:12px;transform:scaleX(1.0476);transform-origin:0 0;color:#111;font-weight:bold;">{3D}</div>
<svg style="left:1584px;top:862px" width="9" height="9"><rect x="0.5" y="0.5" width="8" height="8" rx="1" fill="#fbfbfb" stroke="#8f8f8f"/><path d="M2 4.5H7" stroke="#2b3c8c" stroke-width="1" fill="none"/></svg>
<div class="a" style="left:1594px;top:866px;width:9px;height:1px;background-image:linear-gradient(to right,#9a9a9a 1px,transparent 1px);background-size:2px 1px;"></div>
<div class="t" style="left:1606.30px;top:859px;font-size:11px;line-height:12px;height:12px;transform:scaleX(1.0634);transform-origin:0 0;color:#111;">Elevations (Building Elevation)</div>
<div class="a" style="left:1609px;top:884px;width:11px;height:1px;background-image:linear-gradient(to right,#9a9a9a 1px,transparent 1px);background-size:2px 1px;"></div>
<svg style="left:1620px;top:874px" width="16" height="16"><rect x="0.5" y="0.5" width="15" height="15" fill="#fff" stroke="#4a4a4a" stroke-dasharray="2 1"/><rect x="2.5" y="2.5" width="11" height="11" fill="#f1f1f1" stroke="#8a8a8a"/></svg>
<div class="t" style="left:1642.30px;top:877px;font-size:11px;line-height:12px;height:12px;transform:scaleX(0.9450);transform-origin:0 0;color:#111;">East</div>
<div class="a" style="left:1609px;top:902px;width:11px;height:1px;background-image:linear-gradient(to right,#9a9a9a 1px,transparent 1px);background-size:2px 1px;"></div>
<svg style="left:1620px;top:892px" width="16" height="16"><rect x="0.5" y="0.5" width="15" height="15" fill="#fff" stroke="#4a4a4a" stroke-dasharray="2 1"/><rect x="2.5" y="2.5" width="11" height="11" fill="#f1f1f1" stroke="#8a8a8a"/></svg>
<div class="t" style="left:1642.30px;top:895px;font-size:11px;line-height:12px;height:12px;transform:scaleX(1.1153);transform-origin:0 0;color:#111;">North</div>
<div class="a" style="left:1609px;top:920px;width:11px;height:1px;background-image:linear-gradient(to right,#9a9a9a 1px,transparent 1px);background-size:2px 1px;"></div>
<svg style="left:1620px;top:910px" width="16" height="16"><rect x="0.5" y="0.5" width="15" height="15" fill="#fff" stroke="#4a4a4a" stroke-dasharray="2 1"/><rect x="2.5" y="2.5" width="11" height="11" fill="#f1f1f1" stroke="#8a8a8a"/></svg>
<div class="t" style="left:1642.30px;top:913px;font-size:11px;line-height:12px;height:12px;transform:scaleX(1.0436);transform-origin:0 0;color:#111;">South</div>
<div class="a" style="left:1609px;top:938px;width:11px;height:1px;background-image:linear-gradient(to right,#9a9a9a 1px,transparent 1px);background-size:2px 1px;"></div>
<svg style="left:1620px;top:928px" width="16" height="16"><rect x="0.5" y="0.5" width="15" height="15" fill="#fff" stroke="#4a4a4a" stroke-dasharray="2 1"/><rect x="2.5" y="2.5" width="11" height="11" fill="#f1f1f1" stroke="#8a8a8a"/></svg>
<div class="t" style="left:1642.30px;top:931px;font-size:11px;line-height:12px;height:12px;transform:scaleX(1.0379);transform-origin:0 0;color:#111;">West</div>
<svg style="left:1584px;top:952px" width="9" height="9"><rect x="0.5" y="0.5" width="8" height="8" rx="1" fill="#fbfbfb" stroke="#8f8f8f"/><path d="M2 4.5H7" stroke="#2b3c8c" stroke-width="1" fill="none"/></svg>
<div class="a" style="left:1594px;top:956px;width:9px;height:1px;background-image:linear-gradient(to right,#9a9a9a 1px,transparent 1px);background-size:2px 1px;"></div>
<div class="t" style="left:1606.30px;top:949px;font-size:11px;line-height:12px;height:12px;transform:scaleX(1.0650);transform-origin:0 0;color:#111;">Sections (Building Section)</div>
<div class="a" style="left:1609px;top:974px;width:11px;height:1px;background-image:linear-gradient(to right,#9a9a9a 1px,transparent 1px);background-size:2px 1px;"></div>
<svg style="left:1620px;top:964px" width="16" height="16"><rect x="0.5" y="0.5" width="15" height="15" fill="#fff" stroke="#4a4a4a" stroke-dasharray="2 1"/><rect x="2.5" y="2.5" width="11" height="11" fill="#f1f1f1" stroke="#8a8a8a"/></svg>
<div class="t" style="left:1642.30px;top:967px;font-size:11px;line-height:12px;height:12px;transform:scaleX(1.0335);transform-origin:0 0;color:#111;">Section 1</div>
<svg style="left:1584px;top:988px" width="9" height="9"><rect x="0.5" y="0.5" width="8" height="8" rx="1" fill="#fbfbfb" stroke="#8f8f8f"/><path d="M2 4.5H7" stroke="#2b3c8c" stroke-width="1" fill="none"/></svg>
<div class="a" style="left:1594px;top:992px;width:9px;height:1px;background-image:linear-gradient(to right,#9a9a9a 1px,transparent 1px);background-size:2px 1px;"></div>
<div class="t" style="left:1606.30px;top:985px;font-size:11px;line-height:12px;height:12px;transform:scaleX(1.0310);transform-origin:0 0;color:#111;">Renderings</div>
<div class="a" style="left:1620px;top:1000px;width:16px;height:3px;overflow:hidden"><svg style="left:0px;top:0px" width="16" height="16"><rect x="0.5" y="0.5" width="15" height="15" fill="#fff" stroke="#4a4a4a" stroke-dasharray="2 1"/><rect x="2.5" y="2.5" width="11" height="11" fill="#f1f1f1" stroke="#8a8a8a"/></svg>
</div>
<div class="a" style="left:1608px;top:241px;width:1px;height:210px;background-image:linear-gradient(to bottom,#9a9a9a 1px,transparent 1px);background-size:1px 2px;"></div>
<div class="a" style="left:1608px;top:475px;width:1px;height:192px;background-image:linear-gradient(to bottom,#9a9a9a 1px,transparent 1px);background-size:1px 2px;"></div>
<div class="a" style="left:1608px;top:691px;width:1px;height:156px;background-image:linear-gradient(to bottom,#9a9a9a 1px,transparent 1px);background-size:1px 2px;"></div>
<div class="a" style="left:1608px;top:871px;width:1px;height:66px;background-image:linear-gradient(to bottom,#9a9a9a 1px,transparent 1px);background-size:1px 2px;"></div>
<div class="a" style="left:1608px;top:961px;width:1px;height:12px;background-image:linear-gradient(to bottom,#9a9a9a 1px,transparent 1px);background-size:1px 2px;"></div>
<div class="a" style="left:1608px;top:997px;width:1px;height:6px;background-image:linear-gradient(to bottom,#9a9a9a 1px,transparent 1px);background-size:1px 2px;"></div>
<div class="a" style="left:373px;top:170px;width:1181px;height:20px;background:#cccccc;"></div>
<div class="a" style="left:373px;top:170px;width:128px;height:20px;background:#ffffff;"></div>
<div class="a" style="left:373px;top:190px;width:1181px;height:816px;background:#eeeeee;"></div>
<div class="a" style="left:373px;top:190px;width:1164px;height:2px;background:#ffffff;"></div>
<div class="a" style="left:373px;top:192px;width:2px;height:794px;background:#ffffff;"></div>
<svg style="left:377px;top:172px" width="17" height="17" viewBox="0 0 17 17">
<path d="M2.5 7.5 L2.5 13 L7.5 15.5 L14 12.5 L14 7 L10 2.5 Z" fill="#f6f7f9" stroke="#40434a" stroke-width="1" stroke-linejoin="round"/>
<path d="M7.5 10 L7.5 15.5 L14 12.5 L14 7 Z" fill="#c3c7d0" stroke="#40434a" stroke-width="0.8"/>
<path d="M1 7.3 L4 4 L9.5 1.2 L15.5 7 L8 10.5 L4 4.3" fill="#d8dce3" stroke="#40434a" stroke-width="1" stroke-linejoin="round"/>
<path d="M1 7.3 L4 4.2 L8 10.5" fill="#f1f2f5" stroke="#40434a" stroke-width="0.9" stroke-linejoin="round"/>
<path d="M4 10.2 L5.6 11 L5.6 14.3 L4 13.5Z" fill="#3a3d44"/></svg>
<div class="t" style="left:401.50px;top:174px;font-size:12px;line-height:14px;height:14px;transform:scaleX(1.0276);transform-origin:0 0;color:#c4c4c4;">{3D}</div>
<svg style="left:486px;top:176px" width="10" height="10"><path d="M0.8 0.8L9.2 9.2M9.2 0.8L0.8 9.2" stroke="#111" stroke-width="1.5" fill="none"/></svg>
<svg style="left:1541px;top:178px" width="9" height="8"><path d="M0 0.7H9" stroke="#333" stroke-width="1.4"/><path d="M0 3L9 3L4.5 7.5Z" fill="#333"/></svg>
<div class="a" style="left:375px;top:192px;width:1162px;height:794px;background:#ffffff;border:4px solid #00f0ff;"></div>
<div class="a" style="left:379px;top:196px;width:169px;height:20px;background:#00f0ff;"></div>
<div class="t" style="left:380.00px;top:197px;font-size:13px;line-height:15px;height:15px;transform:scaleX(1.1449);transform-origin:0 0;color:#000;font-weight:bold;">Temporary Hide/Isolate</div>
<div class="a" style="left:373px;top:986px;width:1181px;height:17px;background:#eeeeee;"></div>
<div class="a" style="left:373px;top:1003px;width:1181px;height:2px;background:#f8f8f8;"></div>
<div class="t" style="left:387.00px;top:988px;font-size:12px;line-height:14px;height:14px;transform:scaleX(0.9400);transform-origin:0 0;color:#111;">1/8&quot; = 1&#x27;-0&quot;</div>
<svg style="left:379px;top:196px;overflow:hidden" width="1154" height="786" viewBox="0 0 1154 786">
<defs>
<radialGradient id="gt" gradientUnits="userSpaceOnUse" cx="420" cy="340" r="400" gradientTransform="translate(420 340) scale(1 0.56) translate(-420 -340)">
<stop offset="0" stop-color="#5d5e56"/><stop offset="0.18" stop-color="#60615a"/><stop offset="0.4" stop-color="#686961"/><stop offset="0.65" stop-color="#6e6f67"/><stop offset="1" stop-color="#72736b"/></radialGradient>
<linearGradient id="gl" x1="0" y1="0" x2="1" y2="0"><stop offset="0" stop-color="#636459"/><stop offset="0.35" stop-color="#5e5f56"/><stop offset="0.75" stop-color="#5f6057"/><stop offset="1" stop-color="#696a61"/></linearGradient>
</defs>
<polygon points="556.4,586.5 565.0,591.3 601.9,571.1 601.9,572.7 565.0,592.9 556.4,588.1" fill="#ee5236" stroke="#1a0a06" stroke-width="0.7"/><polygon points="556.4,586.5 593.0,566.1 601.9,571.1 565.0,591.3" fill="#f5583c" stroke="#1a0a06" stroke-width="0.8"/>
<polygon points="467.3,638.9 476.5,643.7 513.9,622.8 513.9,624.4 476.5,645.3 467.3,640.5" fill="#ee5236" stroke="#1a0a06" stroke-width="0.7"/><polygon points="467.3,638.9 504.8,618.0 513.9,622.8 476.5,643.7" fill="#f5583c" stroke="#1a0a06" stroke-width="0.8"/>
<polygon points="35.9,560.8 301.6,714.5 301.6,716.9 35.9,563.2" fill="#d6d6cf" stroke="#222" stroke-width="0.6"/>
<polygon points="21.5,538.6 47.5,554.0 35.9,560.8 35.9,563.2 46.5,556.4 21.5,541.0" fill="#3a3a36" stroke="#222" stroke-width="0.6"/>
<polygon points="301.6,714.5 734.5,465.5 740.6,469.3 777.8,447.8 777.8,450.2 740.6,471.7 734.5,467.9 301.6,716.9" fill="#6a6b63" stroke="#151515" stroke-width="0.7"/>
<polygon points="21.5,538.6 47.5,554.0 35.9,560.8 301.6,714.5 734.5,465.5 740.6,469.3 777.8,447.8 727.1,417.7 714.0,425.0 681.0,406.0 321.0,544.0 76.0,506.2" fill="url(#gl)" stroke="#1c1c1c" stroke-width="0.9" stroke-linejoin="miter"/>
<polygon points="556.4,517.0 565.0,521.8 601.9,501.6 601.9,503.2 565.0,523.4 556.4,518.6" fill="#ee5236" stroke="#1a0a06" stroke-width="0.7"/><polygon points="556.4,517.0 593.0,496.6 601.9,501.6 565.0,521.8" fill="#f5583c" stroke="#1a0a06" stroke-width="0.8"/>
<polygon points="467.3,569.4 476.5,574.2 513.9,553.3 513.9,554.9 476.5,575.8 467.3,571.0" fill="#ee5236" stroke="#1a0a06" stroke-width="0.7"/><polygon points="467.3,569.4 504.8,548.5 513.9,553.3 476.5,574.2" fill="#f5583c" stroke="#1a0a06" stroke-width="0.8"/>
<polygon points="4.4,490.3 39.3,510.4 47.8,505.5 47.8,507.1 39.3,512.0 4.4,491.9" fill="#f0492f" stroke="#3a1a12" stroke-width="0.5"/><polygon points="4.4,490.3 32.1,474.3 40.6,479.2 21.4,490.3 47.8,505.5 39.3,510.4" fill="#f0492f" stroke="#3a1a12" stroke-width="0.7"/>
<polygon points="35.9,491.0 301.6,644.5 301.6,646.9 35.9,493.4" fill="#d6d6cf" stroke="#222" stroke-width="0.6"/>
<polygon points="21.5,468.8 47.5,484.2 35.9,491.0 35.9,493.4 46.5,486.6 21.5,471.2" fill="#3a3a36" stroke="#222" stroke-width="0.6"/>
<polygon points="301.6,644.5 734.5,395.6 740.6,399.4 777.8,377.9 777.8,380.3 740.6,401.8 734.5,398.0 301.6,646.9" fill="#6a6b63" stroke="#151515" stroke-width="0.7"/>
<polygon points="21.5,468.8 47.5,484.2 35.9,491.0 301.6,644.5 734.5,395.6 740.6,399.4 777.8,377.9 727.1,347.8 714.0,355.1 681.0,336.1 321.0,474.2 76.0,436.4" fill="url(#gl)" stroke="#1c1c1c" stroke-width="0.9" stroke-linejoin="miter"/>
<polygon points="556.4,447.5 565.0,452.3 601.9,432.1 601.9,433.7 565.0,453.9 556.4,449.1" fill="#ee5236" stroke="#1a0a06" stroke-width="0.7"/><polygon points="556.4,447.5 593.0,427.1 601.9,432.1 565.0,452.3" fill="#f5583c" stroke="#1a0a06" stroke-width="0.8"/>
<polygon points="467.3,499.9 476.5,504.7 513.9,483.8 513.9,485.4 476.5,506.3 467.3,501.5" fill="#ee5236" stroke="#1a0a06" stroke-width="0.7"/><polygon points="467.3,499.9 504.8,479.0 513.9,483.8 476.5,504.7" fill="#f5583c" stroke="#1a0a06" stroke-width="0.8"/>
<polygon points="4.4,420.3 39.3,440.4 47.8,435.5 47.8,437.1 39.3,442.0 4.4,421.9" fill="#f1f1e6" stroke="#333" stroke-width="0.5"/><polygon points="4.4,420.3 32.1,404.3 40.6,409.2 21.4,420.3 47.8,435.5 39.3,440.4" fill="#f1f1e6" stroke="#333" stroke-width="0.7"/>
<polygon points="35.9,420.8 301.6,574.5 301.6,576.9 35.9,423.2" fill="#d6d6cf" stroke="#222" stroke-width="0.6"/>
<polygon points="21.5,398.6 47.5,414.0 35.9,420.8 35.9,423.2 46.5,416.4 21.5,401.0" fill="#3a3a36" stroke="#222" stroke-width="0.6"/>
<polygon points="301.6,574.5 734.5,326.2 740.6,330.0 777.8,308.5 777.8,310.9 740.6,332.4 734.5,328.6 301.6,576.9" fill="#6a6b63" stroke="#151515" stroke-width="0.7"/>
<polygon points="21.5,398.6 47.5,414.0 35.9,420.8 301.6,574.5 734.5,326.2 740.6,330.0 777.8,308.5 727.1,278.4 714.0,285.7 681.0,266.7 321.0,404.0 76.0,366.2" fill="url(#gl)" stroke="#1c1c1c" stroke-width="0.9" stroke-linejoin="miter"/>
<polygon points="556.4,378.0 565.0,382.8 601.9,362.6 601.9,364.2 565.0,384.4 556.4,379.6" fill="#ee5236" stroke="#1a0a06" stroke-width="0.7"/><polygon points="556.4,378.0 593.0,357.6 601.9,362.6 565.0,382.8" fill="#f5583c" stroke="#1a0a06" stroke-width="0.8"/>
<polygon points="467.3,430.4 476.5,435.2 513.9,414.3 513.9,415.9 476.5,436.8 467.3,432.0" fill="#ee5236" stroke="#1a0a06" stroke-width="0.7"/><polygon points="467.3,430.4 504.8,409.5 513.9,414.3 476.5,435.2" fill="#f5583c" stroke="#1a0a06" stroke-width="0.8"/>
<polygon points="4.4,349.3 38.8,370.7 38.8,372.6 4.4,351.2" fill="#c43c26" stroke="#3a1a12" stroke-width="0.5"/><polygon points="4.4,349.3 38.8,370.7 49.0,364.8 14.6,343.4" fill="#f0492f" stroke="#3a1a12" stroke-width="0.7"/>
<polygon points="336.3,159.4 370.3,179.0 379.0,174.0 379.0,175.6 370.3,180.6 336.3,161.0" fill="#f5563a" stroke="#000" stroke-width="0.5"/><polygon points="336.3,159.4 357.1,147.4 365.7,152.4 353.6,159.4 379.0,174.0 370.3,179.0" fill="#f5563a" stroke="#000" stroke-width="0.7"/>
<polygon points="368.0,199.1 393.3,184.9 479.9,232.0 451.6,248.1" fill="#5e5f56" stroke="#1c1c1c" stroke-width="0.8"/>
<polygon points="202.0,294.8 226.9,281.2 311.5,326.5 283.3,342.9" fill="#5e5f56" stroke="#1c1c1c" stroke-width="0.8"/>
<polygon points="467.5,65.5 715.2,207.9 726.0,202.1 789.0,239.2 740.4,268.0 734.2,264.4 566.5,360.6 560.6,357.2 498.6,393.1 502.9,397.3 301.5,513.8 0.4,336.1 134.9,258.3 202.0,294.8 283.3,342.9 311.5,326.5 164.2,240.4 289.5,168.9 315.4,182.9 327.1,176.1 368.0,199.1 451.6,248.1 479.9,232.0 355.3,159.7 367.6,152.5 342.4,138.2" fill="url(#gt)" stroke="#161616" stroke-width="0.9" stroke-linejoin="miter"/>
<polyline points="342.4,139.2 367.6,153.5 355.3,160.7 479.9,233.0" fill="none" stroke="#0a0a0a" stroke-width="2.8" stroke-linejoin="miter" stroke-linecap="butt"/>
<polyline points="164.2,241.4 311.5,327.5" fill="none" stroke="#0a0a0a" stroke-width="2.8" stroke-linejoin="miter" stroke-linecap="butt"/>
<polyline points="0.4,337.3 301.5,514.9 502.9,398.3 501.2,396.8" fill="none" stroke="#0a0a0a" stroke-width="3" stroke-linejoin="miter" stroke-linecap="butt"/>
<polyline points="563.5,359.4 566.5,361.4 734.2,265.2 740.4,268.8 789.0,240.0" fill="none" stroke="#0a0a0a" stroke-width="2.4" stroke-linejoin="miter" stroke-linecap="butt"/>
<polygon points="560.6,357.2 498.6,393.1 498.6,395.3 560.6,359.4" fill="#6c6d65" stroke="#161616" stroke-width="0.8"/>
<polygon points="401.0,288.0 504.6,347.9 504.6,350.1 401.0,290.2" fill="#3e3f39" stroke="#161616" stroke-width="0.6"/>
<polygon points="504.6,347.9 566.9,311.2 566.9,313.4 504.6,350.1" fill="#80817a" stroke="#161616" stroke-width="0.6"/>
<polygon points="465.0,251.0 566.9,311.2 504.6,347.9 401.0,288.0" fill="#6d6e66" stroke="#161616" stroke-width="0.8"/>
</svg>
<svg style="left:1375px;top:235px" width="145" height="125" viewBox="0 0 145 125">
<defs><radialGradient id="vs" cx="0.5" cy="0.5" r="0.5"><stop offset="0" stop-color="#999" stop-opacity="0.55"/><stop offset="0.6" stop-color="#bbb" stop-opacity="0.25"/><stop offset="1" stop-color="#fff" stop-opacity="0"/></radialGradient>
<linearGradient id="vf" x1="0" y1="0" x2="0" y2="1"><stop offset="0" stop-color="#f1f1f2"/><stop offset="1" stop-color="#dcdcde"/></linearGradient></defs>
<path fill-rule="evenodd" d="M7.400000000000091 76 a64.5 39.5 0 1 0 129 0 a64.5 39.5 0 1 0 -129 0Z M22.30000000000009 77 a49.6 29 0 1 0 99.2 0 a49.6 29 0 1 0 -99.2 0Z" fill="#f3f3f3" stroke="#c9c9c9" stroke-width="0.8" stroke-dasharray="2.5 1.2"/>
<ellipse cx="71.90000000000009" cy="84" rx="42" ry="22" fill="url(#vs)"/>
<polygon points="37.4,26.9 71.5,46.6 71.5,86.7 39.3,65.2" fill="url(#vf)" stroke="#8a8a8a" stroke-width="0.8"/>
<polygon points="106.7,26.6 71.5,46.6 71.5,86.7 104.8,64.6" fill="url(#vf)" stroke="#8a8a8a" stroke-width="0.8"/>
<polygon points="71.9,9.9 106.7,26.6 71.5,46.6 37.4,26.9" fill="#f2f2f3" stroke="#8a8a8a" stroke-width="0.8"/>
<text x="0" y="0" font-family="Liberation Sans" font-weight="bold" font-size="9" fill="#a3a5aa" transform="matrix(0.78 0.50 -0.05 1.12 41.799999999999955 55.5)">FRONT</text>
<text x="0" y="0" font-family="Liberation Sans" font-weight="bold" font-size="9" fill="#a3a5aa" transform="matrix(0.78 -0.50 -0.05 1.12 78.5 68.5)">RIGHT</text>
<text x="0" y="0" font-family="Liberation Sans" font-weight="bold" font-size="9" fill="#b0b2b7" transform="matrix(0.80 0.42 -0.85 0.46 65 24.5)">TOP</text>
<text x="-5.5" y="5" font-family="Liberation Sans" font-weight="bold" font-size="15" fill="#e4e4e4" stroke="#b4b4b4" stroke-width="0.6" transform="translate(25.700000000000045 98) rotate(-50) scale(1.15 0.8)">S</text>
<text x="-5.5" y="5" font-family="Liberation Sans" font-weight="bold" font-size="15" fill="#e4e4e4" stroke="#b4b4b4" stroke-width="0.6" transform="translate(117.40000000000009 98) rotate(-35) scale(1.15 0.8)">E</text>
<text x="-5.5" y="5" font-family="Liberation Sans" font-weight="bold" font-size="15" fill="#e4e4e4" stroke="#b4b4b4" stroke-width="0.6" transform="translate(31.700000000000045 45) rotate(-30) scale(1.15 0.8)">W</text>
<text x="-5.5" y="5" font-family="Liberation Sans" font-weight="bold" font-size="15" fill="#e4e4e4" stroke="#b4b4b4" stroke-width="0.6" transform="translate(112 45.5) rotate(25) scale(1.15 0.8)">N</text>
</svg>
<svg style="left:1500px;top:362px" width="38" height="120" viewBox="0 0 38 120">
<defs><linearGradient id="nb" x1="0" y1="0" x2="1" y2="0"><stop offset="0" stop-color="#f7f7f7"/><stop offset="1" stop-color="#e6e6e6"/></linearGradient></defs>
<rect x="2" y="1.5" width="34" height="116.5" rx="3.5" fill="url(#nb)" stroke="#a8a8a8" stroke-width="1.3"/>
<path d="M2.5 59.5H33" stroke="#b5b5b5" stroke-width="1"/>
<circle cx="28.6" cy="8" r="3.6" fill="#bdbdbd"/><path d="M26.8 6.2L30.4 9.8M30.4 6.2L26.8 9.8" stroke="#f4f4f4" stroke-width="1"/>
<circle cx="28.6" cy="110.6" r="3.6" fill="#bdbdbd"/><path d="M26.4 110.6H30.8" stroke="#f4f4f4" stroke-width="1.2"/>
<path d="M8 33 a10.8 10.8 0 0 1 10.8 -10.8 H27 a2.6 2.6 0 0 1 2.6 2.6 V33 a10.8 10.8 0 0 1 -21.6 0Z" fill="#e7e8ea" stroke="#8d8d8d" stroke-width="0.9"/>
<circle cx="18.8" cy="32" r="6" fill="#eceded" stroke="#8d8d8d" stroke-width="0.9"/>
<path d="M14.8 36.6L10.5 40.5M22.8 36.6L27 40.5" stroke="#8d8d8d" stroke-width="0.8"/>
<path d="M16 52H21.4L18.7 55.2Z" fill="#8a8a8a"/>
<rect x="12.5" y="68" width="9.5" height="10.5" fill="#a9c795" stroke="#86aa70" stroke-width="0.8"/>
<circle cx="20.3" cy="78" r="2.7" fill="#e8eef2" stroke="#8d8d8d" stroke-width="0.9"/><path d="M22.3 80L25.3 83.3" stroke="#8d8d8d" stroke-width="1.4"/>
<path d="M16 94H21.4L18.7 97.2Z" fill="#9a9a9a"/>
</svg>
<div class="a" style="left:1545px;top:581px;width:2px;height:17px;background:#5a5a5a;"></div>
<div class="a" style="left:1185px;top:421px;width:328px;height:276px;background:#ffffff;border-radius:9px;box-shadow:0 1px 9px rgba(0,0,0,0.22),0 0 2px rgba(0,0,0,0.12);"></div>
<div class="t" style="left:1212.50px;top:448px;font-size:15.5px;line-height:17px;height:17px;transform:scaleX(0.9014);transform-origin:0 0;color:#f4514a;font-weight:bold;">Quick Finder</div>
<svg style="left:1462px;top:447px" width="22" height="22"><circle cx="10.9" cy="11" r="9.6" fill="none" stroke="#1f2d4a" stroke-width="1"/><path d="M5.8 5.9L16 16.1M16 5.9L5.8 16.1" stroke="#1f2d4a" stroke-width="1"/></svg>
<div class="a" style="left:1185px;top:489px;width:328px;height:2px;background:#707a8a;height:1.6px;top:489.3px;"></div>
<div class="t" style="left:1205.50px;top:530px;font-size:11.5px;line-height:12px;height:12px;transform:scaleX(0.9890);transform-origin:0 0;color:#3b4660;">Input Name</div>
<div class="a" style="left:1204px;top:554px;width:280px;height:27px;background:#fff;border:1px solid #7d7d7d;border-radius:5px;"></div>
<div class="t" style="left:1209.70px;top:560px;font-size:13.5px;line-height:15px;height:15px;color:#111;">Roof</div>
<div class="a" style="left:1204px;top:639px;width:280px;height:30px;background:#f8504b;border-radius:11px;"></div>
<div class="t" style="left:1324.30px;top:646px;font-size:13px;line-height:15px;height:15px;transform:scaleX(1.0286);transform-origin:0 0;color:#fff;">Isolate</div>
<svg style="left:454px;top:987px" width="16" height="12" viewBox="0 0 16 12"><rect x="0.6" y="0.6" width="14.8" height="10.8" rx="1" fill="#f4f4f4" stroke="#3a3d44" stroke-width="1.2"/><path d="M1 1H15V2.6H1Z" fill="#3a3d44"/><path d="M1 3H4.5V6H1ZM8 3H11.5V6H8ZM4.5 6H8V9H4.5ZM11.5 6H15V9H11.5ZM1 9H4.5V11H1ZM8 9H11.5V11H8Z" fill="#8a8d94"/><path d="M4.5 3H8V6H4.5Z" fill="#c8c8c8"/></svg>
<svg style="left:475px;top:988px" width="16" height="13" viewBox="0 0 16 13"><path d="M1 4.6L4.4 0.8H15.2V7.4L11.8 11.6H1Z" fill="#cfe6f7" stroke="#1f6fd0" stroke-width="1.1" stroke-linejoin="round"/><path d="M1 4.6H11.8V11.6M11.8 4.6L15.2 0.8" fill="none" stroke="#1f6fd0" stroke-width="1"/><path d="M2.8 6.8H9.8" stroke="#e02020" stroke-width="1.2"/><path d="M2.8 9.2H9.8" stroke="#20b040" stroke-width="1.2"/></svg>
<svg style="left:495px;top:986px" width="16" height="15" viewBox="0 0 16 15"><g stroke="#e09a20" stroke-width="1"><path d="M6.6 0.4V2.2M6.6 11V12.8M0.4 6.6H2.2M11 6.6H12.8M2.2 2.2L3.4 3.4M11 2.2L9.8 3.4M2.2 11L3.4 9.8"/></g><circle cx="6.6" cy="6.6" r="3.9" fill="#ffe680" stroke="#e0a020" stroke-width="0.9"/><circle cx="5.6" cy="5.6" r="1.8" fill="#fff8d0"/><path d="M9 8l5 5m0 -5l-5 5" stroke="#d8181c" stroke-width="2.2" fill="none"/></svg>
<svg style="left:518px;top:988px" width="15" height="13" viewBox="0 0 15 13"><circle cx="5.6" cy="5" r="4.4" fill="#dcecfb" stroke="#2f7de1" stroke-width="1.1"/><circle cx="4.6" cy="4" r="2" fill="#f8fbff"/><path d="M0.8 11.6H6.4" stroke="#444" stroke-width="1.6"/><path d="M8 6.6l5 5m0 -5l-5 5" stroke="#d8181c" stroke-width="2.2" fill="none"/></svg>
<svg style="left:536px;top:988px" width="18" height="13" viewBox="0 0 18 13"><path d="M4.2 3.4H11.4C12.6 5 12.6 8.4 11 10.4H4.8C3.2 8.8 2.8 5.6 4.2 3.4Z" fill="#e6e6e6" stroke="#777" stroke-width="0.9"/><path d="M4 6L0.6 3.6L1.4 3L4.2 4.6M6.2 3.2C6.6 1.6 9.2 1.6 9.6 3.2" fill="none" stroke="#777" stroke-width="0.9"/><circle cx="13.4" cy="6.4" r="2.7" fill="#eaf3ff" stroke="#2f7de1" stroke-width="1.2"/><rect x="12.3" y="9.2" width="2.2" height="2.6" fill="#9aa0a8" stroke="#555" stroke-width="0.5"/></svg>
<svg style="left:557px;top:987px" width="18" height="14" viewBox="0 0 18 14"><path d="M4.4 13V4.4H15.6" fill="none" stroke="#1f6fd0" stroke-width="1.8"/><path d="M0.6 9.2H3M0.6 10.8H3M10.4 0.8H13" stroke="#444" stroke-width="1"/><path d="M6.4 9.6H10" stroke="#e02020" stroke-width="1"/><path d="M7 6.6H15.6V13" fill="none" stroke="#1f6fd0" stroke-width="1"/><path d="M10.6 7.4l5 5m0 -5l-5 5" stroke="#d8181c" stroke-width="2.2" fill="none"/></svg>
<svg style="left:578px;top:987px" width="18" height="14" viewBox="0 0 18 14"><path d="M4.4 13V4.4H11" fill="none" stroke="#1f6fd0" stroke-width="1.8"/><path d="M0.6 9.2H3M0.6 10.8H3M10.4 0.8H13" stroke="#444" stroke-width="1"/><path d="M6.4 9.6H10" stroke="#e02020" stroke-width="1"/><path d="M7 6.6H10.5V13" fill="none" stroke="#1f6fd0" stroke-width="1"/><circle cx="13.2" cy="5.4" r="2.7" fill="#eaf3ff" stroke="#2f7de1" stroke-width="1.2"/><rect x="12.1" y="8.2" width="2.2" height="2.6" fill="#9aa0a8" stroke="#555" stroke-width="0.5"/></svg>
<svg style="left:600px;top:986px" width="16" height="15" viewBox="0 0 16 15"><path d="M2 6.4V11.8L6 13.8V8.4ZM6 8.4L13 5.6" fill="#f2f2f4" stroke="#3a3d44" stroke-width="1"/><path d="M0.8 6.2L3.6 3L8.8 0.8L14.6 5.8L6.6 8.8L3.6 3.2" fill="#e1e3e8" stroke="#3a3d44" stroke-width="1" stroke-linejoin="round"/><path d="M3.4 8.2L4.8 8.9V12.4L3.4 11.7Z" fill="#3a3d44"/><rect x="8" y="9.6" width="6.8" height="4.8" fill="#6fb3a6" stroke="#2a6e62" stroke-width="0.9"/><path d="M9.4 9.6V8C9.4 6.2 12.6 6.2 12.6 7.4" fill="none" stroke="#2a6e62" stroke-width="1"/></svg>
<svg style="left:620px;top:988px" width="17" height="12" viewBox="0 0 17 12"><path d="M0.6 3.6C2 2.2 3.4 3.8 4.6 6.4M8.8 1.4C11 -0.2 13.8 1.2 15.6 4" fill="none" stroke="#2c2f36" stroke-width="1"/><path d="M4.6 6.4C5 9.4 7.2 10.6 9.8 8.8L11.4 7.6C13.4 8.2 15.6 7.4 16 4.4L12.6 5L10.6 6.4L8.2 6.2Z" fill="#d6e8f8" stroke="#2c2f36" stroke-width="1" stroke-linejoin="round"/></svg>
<svg style="left:646px;top:989px" width="8" height="12" viewBox="0 0 8 12"><circle cx="3.8" cy="3.6" r="2.7" fill="#eaf3ff" stroke="#2f7de1" stroke-width="1.2"/><rect x="2.6999999999999997" y="6.4" width="2.2" height="2.6" fill="#9aa0a8" stroke="#555" stroke-width="0.5"/></svg>
<svg style="left:663px;top:988px" width="16" height="13" viewBox="0 0 16 13"><rect x="1" y="2" width="11.4" height="9.2" fill="#d6d8e0" stroke="#111" stroke-width="1.4" stroke-dasharray="1.6 0.9"/><rect x="8.2" y="5" width="6.6" height="6.6" fill="#f4f4f4" stroke="#111" stroke-width="1.2" stroke-dasharray="2.2 1"/><circle cx="11.5" cy="8.3" r="1.3" fill="none" stroke="#111" stroke-width="1"/></svg>
<svg style="left:683px;top:988px" width="18" height="13" viewBox="0 0 18 13"><path d="M1 12V6L4.4 1.4H12" fill="none" stroke="#555" stroke-width="1"/><path d="M3 3.6H12M2 6H12M6.4 1.4V12M9.2 1.4V12" stroke="#777" stroke-width="0.8"/><path d="M3.4 7V12M6 7V12" stroke="#d02010" stroke-width="1.3"/><circle cx="13.6" cy="5.6" r="2.7" fill="#eaf3ff" stroke="#2f7de1" stroke-width="1.2"/><rect x="12.5" y="8.399999999999999" width="2.2" height="2.6" fill="#9aa0a8" stroke="#555" stroke-width="0.5"/></svg>
<svg style="left:705px;top:988px" width="16" height="13" viewBox="0 0 16 13"><path d="M1 5.2L4 1H14.4V8L11.6 12H1Z" fill="#dcdcdc" stroke="#666" stroke-width="1"/><path d="M1 5.2H11.6V12M11.6 5.2L14.4 1" fill="none" stroke="#666" stroke-width="0.9"/><rect x="3.6" y="7" width="5.4" height="5" fill="#bdbdbd" stroke="#666" stroke-width="0.8"/><path d="M5.4 3.2L6.6 1.6H11L9.8 3.2Z" fill="#c4c4c4" stroke="#777" stroke-width="0.6"/></svg>
<svg style="left:725px;top:987px" width="18" height="13" viewBox="0 0 18 13"><path d="M1 0.4V12.4M16 0.4V4.4M1 2.4H16" fill="none" stroke="#333" stroke-width="1.1"/><path d="M1 2.4L3.6 1.2V3.6ZM16 2.4L13.4 1.2V3.6Z" fill="#333"/><path d="M2 9.6H9" stroke="#888" stroke-width="0.9" stroke-dasharray="1.4 1"/><rect x="10.2" y="7.6" width="6.6" height="4.6" rx="0.8" fill="#777" stroke="#333" stroke-width="0.8"/><path d="M11.6 7.6V6.6C11.6 5 15.4 5 15.4 6.6V7.6" fill="none" stroke="#333" stroke-width="1"/></svg>
<div class="a" style="left:1133px;top:994px;width:17px;height:2px;background:#707070;"></div>
<svg style="left:1544px;top:994px" width="8" height="8" viewBox="0 0 8 8"><rect x="6" y="0" width="1.6" height="1.6" fill="#9a9a9a"/><rect x="3" y="3" width="1.6" height="1.6" fill="#9a9a9a"/><rect x="6" y="3" width="1.6" height="1.6" fill="#9a9a9a"/><rect x="0" y="6" width="1.6" height="1.6" fill="#9a9a9a"/><rect x="3" y="6" width="1.6" height="1.6" fill="#9a9a9a"/><rect x="6" y="6" width="1.6" height="1.6" fill="#9a9a9a"/></svg>
<div class="a" style="left:373px;top:1003px;width:1544px;height:2px;background:#f6f6f6;"></div>
<div class="a" style="left:0px;top:1005px;width:1917px;height:23px;background:#cccccc;"></div>
<svg style="left:896px;top:1009px" width="18" height="18" viewBox="0 0 18 18"><g fill="#a8a8a8" stroke="#8f8f8f" stroke-width="0.9"><rect x="1" y="9.6" width="4.6" height="7"/><rect x="6.6" y="6.6" width="4.6" height="10"/><rect x="12.2" y="9.6" width="4.6" height="7"/><circle cx="3.3" cy="6.8" r="1.9"/><circle cx="9" cy="3.4" r="2.1"/><circle cx="14.5" cy="6.8" r="1.9"/></g></svg>
<div class="a" style="left:920px;top:1009px;width:204px;height:18px;background:#fdfdfd;border:1px solid #e2e2e2;"></div>
<div class="a" style="left:1107px;top:1010px;width:1px;height:16px;background:#ececec;"></div>
<svg style="left:1112px;top:1016px" width="10" height="6" viewBox="0 0 10 6"><path d="M0.6 0.6L5 5L9.4 0.6" fill="none" stroke="#8a8a8a" stroke-width="1"/></svg>
<svg style="left:1132px;top:1010px" width="17" height="16" viewBox="0 0 17 16"><path d="M4 1.2H14C15 1.2 15.4 1.8 15.4 2.8V4.6C15.4 5.6 15 6 14 6H4C3 6 2.6 5.6 2.6 4.6V2.8C2.6 1.8 3 1.2 4 1.2Z" fill="#e2e2e2" stroke="#8f8f8f" stroke-width="1"/><path d="M13 6V8.4H8V11" fill="none" stroke="#8f8f8f" stroke-width="1.2"/><path d="M6.4 10.6H9.4L10.4 15.4H0.8C1.6 13 4.4 13.2 6.4 10.6Z" fill="#9a9a9a"/></svg>
<div class="t" style="left:1153.00px;top:1012px;font-size:12px;line-height:14px;height:14px;transform:scaleX(0.9493);transform-origin:0 0;color:#111;">:0</div>
<div class="a" style="left:1186px;top:1010px;width:16px;height:16px;background:#a6a6a6;border-radius:2px;"></div>
<div class="a" style="left:1188px;top:1012px;width:1.5px;height:1.5px;background:#d6d6d6;"></div>
<svg style="left:1212px;top:1010px" width="17" height="17" viewBox="0 0 17 17"><rect x="2" y="0.6" width="13.6" height="13.6" fill="#a6a6a6"/><path d="M0.6 11H8M5.4 8.2L8.4 11L5.4 13.8" fill="none" stroke="#dedede" stroke-width="1.2"/><path d="M3 15H15.6V3" fill="none" stroke="#e4e4e4" stroke-width="0.9"/></svg>
<div class="a" style="left:1236px;top:1009px;width:204px;height:18px;background:#fdfdfd;border:1px solid #e2e2e2;"></div>
<div class="a" style="left:1422px;top:1010px;width:1px;height:16px;background:#ececec;"></div>
<div class="t" style="left:1238.80px;top:1012px;font-size:12px;line-height:14px;height:14px;transform:scaleX(1.0157);transform-origin:0 0;color:#6a6a6a;">Main Model</div>
<svg style="left:1428px;top:1016px" width="10" height="6" viewBox="0 0 10 6"><path d="M0.6 0.6L5 5L9.4 0.6" fill="none" stroke="#8a8a8a" stroke-width="1"/></svg>
<svg style="left:1668px;top:1010px" width="17" height="16" viewBox="0 0 17 16"><circle cx="4" cy="4" r="2.6" fill="#8c8c8c"/><circle cx="11" cy="4" r="2.6" fill="#8c8c8c"/><path d="M1 6H14.6V8.4H9V14.6H6.4V8.4H1Z" fill="#8c8c8c"/><path d="M11 9L12.6 13L13.4 11.4L15.4 11Z" fill="#eee" stroke="#8c8c8c" stroke-width="0.6"/></svg>
<svg style="left:1694px;top:1010px" width="17" height="16" viewBox="0 0 17 16"><path d="M0.8 14.4L9 2.2L15.6 8.4V14.4Z" fill="#8c8c8c"/><path d="M10 9L11.6 13L12.4 11.4L14.4 11Z" fill="#eee" stroke="#8c8c8c" stroke-width="0.6"/></svg>
<svg style="left:1720px;top:1010px" width="17" height="16" viewBox="0 0 17 16"><path d="M1.6 2H14V8.4H11.4V14.4H8.8V8.4H6.8V11.6H4.2V8.4H1.6Z" fill="#8c8c8c"/><path d="M11 9.6L12.6 13.6L13.4 12L15.4 11.6Z" fill="#eee" stroke="#8c8c8c" stroke-width="0.6"/></svg>
<svg style="left:1746px;top:1010px" width="17" height="16" viewBox="0 0 17 16"><path d="M1.4 13.6V3.2L6 1.4L8 3.2L11 1.8L14.6 4.4V13.6Z" fill="#8c8c8c"/><path d="M10.6 9.2L12.2 13.2L13 11.6L15 11.2Z" fill="#eee" stroke="#8c8c8c" stroke-width="0.6"/></svg>
<svg style="left:1772px;top:1010px" width="17" height="16" viewBox="0 0 17 16"><path d="M3.4 0.8V10.4M7.2 0.8V10.4M0.8 3.4H10.4M0.8 7.2H10.4" stroke="#8c8c8c" stroke-width="1" stroke-dasharray="1.4 0.8"/><path d="M8.4 6.4L11 14L12.4 11.4L15.4 10.6Z" fill="#eee" stroke="#8c8c8c" stroke-width="0.9"/></svg>
<svg style="left:1798px;top:1010px" width="17" height="16" viewBox="0 0 17 16"><circle cx="8" cy="8" r="5.6" fill="none" stroke="#a6a6a6" stroke-width="2.6" stroke-dasharray="2.6 1.2"/></svg>
<svg style="left:1821px;top:1010px" width="17" height="16" viewBox="0 0 17 16"><path d="M1 2.2C1 0.6 15.6 0.6 15.6 2.2L10.2 8.4V14.6L6.6 12.6V8.4Z" fill="#f2f2f2" stroke="#333" stroke-width="1.1" stroke-linejoin="round"/><ellipse cx="8.3" cy="2.4" rx="6.4" ry="1.2" fill="#fff" stroke="#333" stroke-width="0.7"/></svg>
<div class="t" style="left:1838.50px;top:1012px;font-size:12px;line-height:14px;height:14px;transform:scaleX(0.9493);transform-origin:0 0;color:#111;">:0</div>
<div class="t" style="left:1.50px;top:1012px;font-size:11px;line-height:12px;height:12px;transform:scaleX(1.0281);transform-origin:0 0;color:#111;">Click to select, TAB for alternates, CTRL adds, SHIFT unselects.</div>
</body></html>
